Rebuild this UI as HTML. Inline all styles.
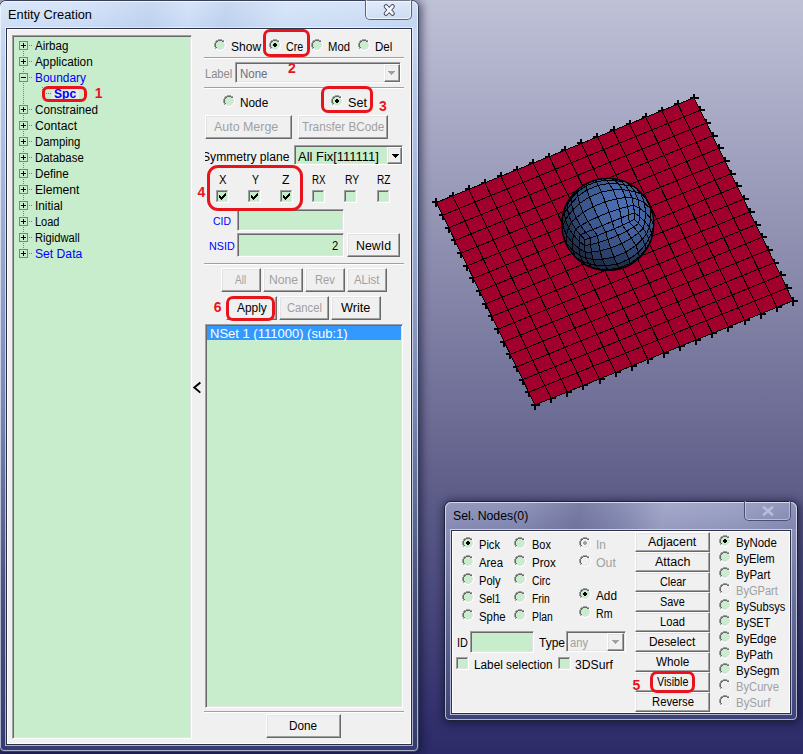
<!DOCTYPE html><html><head><meta charset="utf-8"><style>
html,body{margin:0;padding:0;}body{width:803px;height:754px;overflow:hidden;position:relative;background:linear-gradient(#bfc1d7 0px,#7e7ea3 330px,#5c5c88 500px,#2c2a68 754px);font-family:"Liberation Sans",sans-serif;}
.a{position:absolute;}.t{position:absolute;white-space:nowrap;line-height:1;}
</style></head><body>
<svg width="0" height="0" style="position:absolute" shape-rendering="crispEdges"><defs><symbol id="rg" viewBox="0 0 12 12"><rect x="4" y="0" width="4" height="1" fill="#a0a0a0"/><rect x="2" y="1" width="2" height="1" fill="#a0a0a0"/><rect x="4" y="1" width="4" height="1" fill="#696969"/><rect x="8" y="1" width="2" height="1" fill="#a0a0a0"/><rect x="1" y="2" width="1" height="1" fill="#a0a0a0"/><rect x="2" y="2" width="2" height="1" fill="#696969"/><rect x="4" y="2" width="4" height="1" fill="#c7edcc"/><rect x="8" y="2" width="2" height="1" fill="#696969"/><rect x="10" y="2" width="1" height="1" fill="#ffffff"/><rect x="1" y="3" width="1" height="1" fill="#a0a0a0"/><rect x="2" y="3" width="1" height="1" fill="#696969"/><rect x="3" y="3" width="6" height="1" fill="#c7edcc"/><rect x="9" y="3" width="1" height="1" fill="#e3e3e3"/><rect x="10" y="3" width="1" height="1" fill="#ffffff"/><rect x="0" y="4" width="1" height="1" fill="#a0a0a0"/><rect x="1" y="4" width="1" height="1" fill="#696969"/><rect x="2" y="4" width="8" height="1" fill="#c7edcc"/><rect x="10" y="4" width="1" height="1" fill="#e3e3e3"/><rect x="11" y="4" width="1" height="1" fill="#ffffff"/><rect x="0" y="5" width="1" height="1" fill="#a0a0a0"/><rect x="1" y="5" width="1" height="1" fill="#696969"/><rect x="2" y="5" width="8" height="1" fill="#c7edcc"/><rect x="10" y="5" width="1" height="1" fill="#e3e3e3"/><rect x="11" y="5" width="1" height="1" fill="#ffffff"/><rect x="0" y="6" width="1" height="1" fill="#a0a0a0"/><rect x="1" y="6" width="1" height="1" fill="#696969"/><rect x="2" y="6" width="8" height="1" fill="#c7edcc"/><rect x="10" y="6" width="1" height="1" fill="#e3e3e3"/><rect x="11" y="6" width="1" height="1" fill="#ffffff"/><rect x="0" y="7" width="1" height="1" fill="#a0a0a0"/><rect x="1" y="7" width="1" height="1" fill="#696969"/><rect x="2" y="7" width="8" height="1" fill="#c7edcc"/><rect x="10" y="7" width="1" height="1" fill="#e3e3e3"/><rect x="11" y="7" width="1" height="1" fill="#ffffff"/><rect x="1" y="8" width="1" height="1" fill="#a0a0a0"/><rect x="2" y="8" width="1" height="1" fill="#696969"/><rect x="3" y="8" width="6" height="1" fill="#c7edcc"/><rect x="9" y="8" width="1" height="1" fill="#e3e3e3"/><rect x="10" y="8" width="1" height="1" fill="#ffffff"/><rect x="1" y="9" width="1" height="1" fill="#a0a0a0"/><rect x="2" y="9" width="2" height="1" fill="#e3e3e3"/><rect x="4" y="9" width="4" height="1" fill="#c7edcc"/><rect x="8" y="9" width="2" height="1" fill="#e3e3e3"/><rect x="10" y="9" width="1" height="1" fill="#ffffff"/><rect x="2" y="10" width="2" height="1" fill="#ffffff"/><rect x="4" y="10" width="4" height="1" fill="#e3e3e3"/><rect x="8" y="10" width="2" height="1" fill="#ffffff"/><rect x="4" y="11" width="4" height="1" fill="#ffffff"/></symbol><symbol id="rgc" viewBox="0 0 12 12"><rect x="4" y="0" width="4" height="1" fill="#a0a0a0"/><rect x="2" y="1" width="2" height="1" fill="#a0a0a0"/><rect x="4" y="1" width="4" height="1" fill="#696969"/><rect x="8" y="1" width="2" height="1" fill="#a0a0a0"/><rect x="1" y="2" width="1" height="1" fill="#a0a0a0"/><rect x="2" y="2" width="2" height="1" fill="#696969"/><rect x="4" y="2" width="4" height="1" fill="#c7edcc"/><rect x="8" y="2" width="2" height="1" fill="#696969"/><rect x="10" y="2" width="1" height="1" fill="#ffffff"/><rect x="1" y="3" width="1" height="1" fill="#a0a0a0"/><rect x="2" y="3" width="1" height="1" fill="#696969"/><rect x="3" y="3" width="6" height="1" fill="#c7edcc"/><rect x="9" y="3" width="1" height="1" fill="#e3e3e3"/><rect x="10" y="3" width="1" height="1" fill="#ffffff"/><rect x="0" y="4" width="1" height="1" fill="#a0a0a0"/><rect x="1" y="4" width="1" height="1" fill="#696969"/><rect x="2" y="4" width="8" height="1" fill="#c7edcc"/><rect x="10" y="4" width="1" height="1" fill="#e3e3e3"/><rect x="11" y="4" width="1" height="1" fill="#ffffff"/><rect x="0" y="5" width="1" height="1" fill="#a0a0a0"/><rect x="1" y="5" width="1" height="1" fill="#696969"/><rect x="2" y="5" width="8" height="1" fill="#c7edcc"/><rect x="10" y="5" width="1" height="1" fill="#e3e3e3"/><rect x="11" y="5" width="1" height="1" fill="#ffffff"/><rect x="0" y="6" width="1" height="1" fill="#a0a0a0"/><rect x="1" y="6" width="1" height="1" fill="#696969"/><rect x="2" y="6" width="8" height="1" fill="#c7edcc"/><rect x="10" y="6" width="1" height="1" fill="#e3e3e3"/><rect x="11" y="6" width="1" height="1" fill="#ffffff"/><rect x="0" y="7" width="1" height="1" fill="#a0a0a0"/><rect x="1" y="7" width="1" height="1" fill="#696969"/><rect x="2" y="7" width="8" height="1" fill="#c7edcc"/><rect x="10" y="7" width="1" height="1" fill="#e3e3e3"/><rect x="11" y="7" width="1" height="1" fill="#ffffff"/><rect x="1" y="8" width="1" height="1" fill="#a0a0a0"/><rect x="2" y="8" width="1" height="1" fill="#696969"/><rect x="3" y="8" width="6" height="1" fill="#c7edcc"/><rect x="9" y="8" width="1" height="1" fill="#e3e3e3"/><rect x="10" y="8" width="1" height="1" fill="#ffffff"/><rect x="1" y="9" width="1" height="1" fill="#a0a0a0"/><rect x="2" y="9" width="2" height="1" fill="#e3e3e3"/><rect x="4" y="9" width="4" height="1" fill="#c7edcc"/><rect x="8" y="9" width="2" height="1" fill="#e3e3e3"/><rect x="10" y="9" width="1" height="1" fill="#ffffff"/><rect x="2" y="10" width="2" height="1" fill="#ffffff"/><rect x="4" y="10" width="4" height="1" fill="#e3e3e3"/><rect x="8" y="10" width="2" height="1" fill="#ffffff"/><rect x="4" y="11" width="4" height="1" fill="#ffffff"/><path d="M5 4h2v1h1v2h-1v1h-2v-1h-1v-2h1z" fill="#000"/></symbol><symbol id="rd" viewBox="0 0 12 12"><rect x="4" y="0" width="4" height="1" fill="#a0a0a0"/><rect x="2" y="1" width="2" height="1" fill="#a0a0a0"/><rect x="4" y="1" width="4" height="1" fill="#696969"/><rect x="8" y="1" width="2" height="1" fill="#a0a0a0"/><rect x="1" y="2" width="1" height="1" fill="#a0a0a0"/><rect x="2" y="2" width="2" height="1" fill="#696969"/><rect x="4" y="2" width="4" height="1" fill="#f0f0f0"/><rect x="8" y="2" width="2" height="1" fill="#696969"/><rect x="10" y="2" width="1" height="1" fill="#ffffff"/><rect x="1" y="3" width="1" height="1" fill="#a0a0a0"/><rect x="2" y="3" width="1" height="1" fill="#696969"/><rect x="3" y="3" width="6" height="1" fill="#f0f0f0"/><rect x="9" y="3" width="1" height="1" fill="#e3e3e3"/><rect x="10" y="3" width="1" height="1" fill="#ffffff"/><rect x="0" y="4" width="1" height="1" fill="#a0a0a0"/><rect x="1" y="4" width="1" height="1" fill="#696969"/><rect x="2" y="4" width="8" height="1" fill="#f0f0f0"/><rect x="10" y="4" width="1" height="1" fill="#e3e3e3"/><rect x="11" y="4" width="1" height="1" fill="#ffffff"/><rect x="0" y="5" width="1" height="1" fill="#a0a0a0"/><rect x="1" y="5" width="1" height="1" fill="#696969"/><rect x="2" y="5" width="8" height="1" fill="#f0f0f0"/><rect x="10" y="5" width="1" height="1" fill="#e3e3e3"/><rect x="11" y="5" width="1" height="1" fill="#ffffff"/><rect x="0" y="6" width="1" height="1" fill="#a0a0a0"/><rect x="1" y="6" width="1" height="1" fill="#696969"/><rect x="2" y="6" width="8" height="1" fill="#f0f0f0"/><rect x="10" y="6" width="1" height="1" fill="#e3e3e3"/><rect x="11" y="6" width="1" height="1" fill="#ffffff"/><rect x="0" y="7" width="1" height="1" fill="#a0a0a0"/><rect x="1" y="7" width="1" height="1" fill="#696969"/><rect x="2" y="7" width="8" height="1" fill="#f0f0f0"/><rect x="10" y="7" width="1" height="1" fill="#e3e3e3"/><rect x="11" y="7" width="1" height="1" fill="#ffffff"/><rect x="1" y="8" width="1" height="1" fill="#a0a0a0"/><rect x="2" y="8" width="1" height="1" fill="#696969"/><rect x="3" y="8" width="6" height="1" fill="#f0f0f0"/><rect x="9" y="8" width="1" height="1" fill="#e3e3e3"/><rect x="10" y="8" width="1" height="1" fill="#ffffff"/><rect x="1" y="9" width="1" height="1" fill="#a0a0a0"/><rect x="2" y="9" width="2" height="1" fill="#e3e3e3"/><rect x="4" y="9" width="4" height="1" fill="#f0f0f0"/><rect x="8" y="9" width="2" height="1" fill="#e3e3e3"/><rect x="10" y="9" width="1" height="1" fill="#ffffff"/><rect x="2" y="10" width="2" height="1" fill="#ffffff"/><rect x="4" y="10" width="4" height="1" fill="#e3e3e3"/><rect x="8" y="10" width="2" height="1" fill="#ffffff"/><rect x="4" y="11" width="4" height="1" fill="#ffffff"/></symbol><symbol id="rdc" viewBox="0 0 12 12"><rect x="4" y="0" width="4" height="1" fill="#a0a0a0"/><rect x="2" y="1" width="2" height="1" fill="#a0a0a0"/><rect x="4" y="1" width="4" height="1" fill="#696969"/><rect x="8" y="1" width="2" height="1" fill="#a0a0a0"/><rect x="1" y="2" width="1" height="1" fill="#a0a0a0"/><rect x="2" y="2" width="2" height="1" fill="#696969"/><rect x="4" y="2" width="4" height="1" fill="#f0f0f0"/><rect x="8" y="2" width="2" height="1" fill="#696969"/><rect x="10" y="2" width="1" height="1" fill="#ffffff"/><rect x="1" y="3" width="1" height="1" fill="#a0a0a0"/><rect x="2" y="3" width="1" height="1" fill="#696969"/><rect x="3" y="3" width="6" height="1" fill="#f0f0f0"/><rect x="9" y="3" width="1" height="1" fill="#e3e3e3"/><rect x="10" y="3" width="1" height="1" fill="#ffffff"/><rect x="0" y="4" width="1" height="1" fill="#a0a0a0"/><rect x="1" y="4" width="1" height="1" fill="#696969"/><rect x="2" y="4" width="8" height="1" fill="#f0f0f0"/><rect x="10" y="4" width="1" height="1" fill="#e3e3e3"/><rect x="11" y="4" width="1" height="1" fill="#ffffff"/><rect x="0" y="5" width="1" height="1" fill="#a0a0a0"/><rect x="1" y="5" width="1" height="1" fill="#696969"/><rect x="2" y="5" width="8" height="1" fill="#f0f0f0"/><rect x="10" y="5" width="1" height="1" fill="#e3e3e3"/><rect x="11" y="5" width="1" height="1" fill="#ffffff"/><rect x="0" y="6" width="1" height="1" fill="#a0a0a0"/><rect x="1" y="6" width="1" height="1" fill="#696969"/><rect x="2" y="6" width="8" height="1" fill="#f0f0f0"/><rect x="10" y="6" width="1" height="1" fill="#e3e3e3"/><rect x="11" y="6" width="1" height="1" fill="#ffffff"/><rect x="0" y="7" width="1" height="1" fill="#a0a0a0"/><rect x="1" y="7" width="1" height="1" fill="#696969"/><rect x="2" y="7" width="8" height="1" fill="#f0f0f0"/><rect x="10" y="7" width="1" height="1" fill="#e3e3e3"/><rect x="11" y="7" width="1" height="1" fill="#ffffff"/><rect x="1" y="8" width="1" height="1" fill="#a0a0a0"/><rect x="2" y="8" width="1" height="1" fill="#696969"/><rect x="3" y="8" width="6" height="1" fill="#f0f0f0"/><rect x="9" y="8" width="1" height="1" fill="#e3e3e3"/><rect x="10" y="8" width="1" height="1" fill="#ffffff"/><rect x="1" y="9" width="1" height="1" fill="#a0a0a0"/><rect x="2" y="9" width="2" height="1" fill="#e3e3e3"/><rect x="4" y="9" width="4" height="1" fill="#f0f0f0"/><rect x="8" y="9" width="2" height="1" fill="#e3e3e3"/><rect x="10" y="9" width="1" height="1" fill="#ffffff"/><rect x="2" y="10" width="2" height="1" fill="#ffffff"/><rect x="4" y="10" width="4" height="1" fill="#e3e3e3"/><rect x="8" y="10" width="2" height="1" fill="#ffffff"/><rect x="4" y="11" width="4" height="1" fill="#ffffff"/><path d="M5 4h2v1h1v2h-1v1h-2v-1h-1v-2h1z" fill="#a0a0a0"/></symbol><symbol id="cb" viewBox="0 0 13 13"><rect x="0" y="0" width="13" height="13" fill="#fff"/><rect x="0" y="0" width="12" height="12" fill="#a0a0a0"/><rect x="1" y="1" width="11" height="11" fill="#e3e3e3"/><rect x="1" y="1" width="10" height="10" fill="#696969"/><rect x="2" y="2" width="9" height="9" fill="#c7edcc"/></symbol><symbol id="cbc" viewBox="0 0 13 13"><use href="#cb" width="13" height="13"/><rect x="3" y="5" width="1" height="3" fill="#000"/><rect x="4" y="6" width="1" height="3" fill="#000"/><rect x="5" y="7" width="1" height="3" fill="#000"/><rect x="6" y="6" width="1" height="3" fill="#000"/><rect x="7" y="5" width="1" height="3" fill="#000"/><rect x="8" y="4" width="1" height="3" fill="#000"/><rect x="9" y="3" width="1" height="3" fill="#000"/></symbol></defs></svg>
<svg class="a" style="left:0;top:0" width="803" height="754" viewBox="0 0 803 754"><path d="M432 201h9v2h-9z M435 198h2v9h-2zM439 214h9v2h-9z M442 211h2v9h-2zM445 227h9v2h-9z M448 224h2v9h-2zM451 239h9v2h-9z M454 236h2v9h-2zM457 252h9v2h-9z M460 249h2v9h-2zM463 265h9v2h-9z M466 262h2v9h-2zM469 277h9v2h-9z M472 274h2v9h-2zM476 290h9v2h-9z M479 287h2v9h-2zM482 303h9v2h-9z M485 300h2v9h-2zM488 315h9v2h-9z M491 312h2v9h-2zM494 328h9v2h-9z M497 325h2v9h-2zM500 341h9v2h-9z M503 338h2v9h-2zM506 353h9v2h-9z M509 350h2v9h-2zM513 366h9v2h-9z M516 363h2v9h-2zM519 379h9v2h-9z M522 376h2v9h-2zM525 391h9v2h-9z M528 388h2v9h-2zM531 404h9v2h-9z M534 401h2v9h-2zM449 195h9v2h-9z M452 192h2v9h-2zM547 397h9v2h-9z M550 394h2v9h-2zM465 188h9v2h-9z M468 185h2v9h-2zM563 391h9v2h-9z M566 388h2v9h-2zM481 182h9v2h-9z M484 179h2v9h-2zM579 384h9v2h-9z M582 381h2v9h-2zM497 175h9v2h-9z M500 172h2v9h-2zM596 378h9v2h-9z M599 375h2v9h-2zM513 169h9v2h-9z M516 166h2v9h-2zM612 371h9v2h-9z M615 368h2v9h-2zM529 162h9v2h-9z M532 159h2v9h-2zM628 365h9v2h-9z M631 362h2v9h-2zM545 156h9v2h-9z M548 153h2v9h-2zM644 358h9v2h-9z M647 355h2v9h-2zM561 149h9v2h-9z M564 146h2v9h-2zM660 352h9v2h-9z M663 349h2v9h-2zM577 142h9v2h-9z M580 139h2v9h-2zM676 345h9v2h-9z M679 342h2v9h-2zM593 136h9v2h-9z M596 133h2v9h-2zM692 339h9v2h-9z M695 336h2v9h-2zM610 129h9v2h-9z M613 126h2v9h-2zM708 332h9v2h-9z M711 329h2v9h-2zM626 123h9v2h-9z M629 120h2v9h-2zM724 326h9v2h-9z M727 323h2v9h-2zM642 116h9v2h-9z M645 113h2v9h-2zM741 319h9v2h-9z M744 316h2v9h-2zM658 110h9v2h-9z M661 107h2v9h-2zM757 313h9v2h-9z M760 310h2v9h-2zM674 103h9v2h-9z M677 100h2v9h-2zM773 306h9v2h-9z M776 303h2v9h-2zM690 97h9v2h-9z M693 94h2v9h-2zM696 109h9v2h-9z M699 106h2v9h-2zM702 122h9v2h-9z M705 119h2v9h-2zM709 135h9v2h-9z M712 132h2v9h-2zM715 147h9v2h-9z M718 144h2v9h-2zM721 160h9v2h-9z M724 157h2v9h-2zM727 173h9v2h-9z M730 170h2v9h-2zM733 185h9v2h-9z M736 182h2v9h-2zM740 198h9v2h-9z M743 195h2v9h-2zM746 211h9v2h-9z M749 208h2v9h-2zM752 224h9v2h-9z M755 221h2v9h-2zM758 236h9v2h-9z M761 233h2v9h-2zM764 249h9v2h-9z M767 246h2v9h-2zM770 262h9v2h-9z M773 259h2v9h-2zM777 274h9v2h-9z M780 271h2v9h-2zM783 287h9v2h-9z M786 284h2v9h-2zM789 300h9v2h-9z M792 297h2v9h-2z" fill="#000" shape-rendering="crispEdges"/><polygon points="436.5,202.5 694.0,97.6 793.0,300.8 535.0,405.0" fill="#a2002c" shape-rendering="crispEdges"/><path d="M436.5 202.5L535.0 405.0M436.5 202.5L694.0 97.6M452.6 195.9L551.1 398.5M442.7 215.2L700.2 110.3M468.7 189.4L567.2 392.0M448.8 227.8L706.4 123.0M484.8 182.8L583.4 385.5M455.0 240.5L712.6 135.7M500.9 176.3L599.5 378.9M461.1 253.1L718.8 148.4M517.0 169.7L615.6 372.4M467.3 265.8L724.9 161.1M533.1 163.2L631.8 365.9M473.4 278.4L731.1 173.8M549.2 156.6L647.9 359.4M479.6 291.1L737.3 186.5M565.2 150.1L664.0 352.9M485.8 303.8L743.5 199.2M581.3 143.5L680.1 346.4M491.9 316.4L749.7 211.9M597.4 136.9L696.2 339.9M498.1 329.1L755.9 224.6M613.5 130.4L712.4 333.4M504.2 341.7L762.1 237.3M629.6 123.8L728.5 326.9M510.4 354.4L768.2 250.0M645.7 117.3L744.6 320.3M516.5 367.0L774.4 262.7M661.8 110.7L760.8 313.8M522.7 379.7L780.6 275.4M677.9 104.2L776.9 307.3M528.8 392.3L786.8 288.1M694.0 97.6L793.0 300.8M535.0 405.0L793.0 300.8" stroke="#000" stroke-width="1" fill="none" shape-rendering="crispEdges"/><polygon points="642.62,254.36 644.46,252.66 648.42,246.60 646.72,248.92" fill="rgb(30,44,72)" stroke="rgb(30,44,72)" stroke-width="0.5"/><polygon points="652.84,222.92 653.45,231.42 653.67,225.22 653.25,215.64" fill="rgb(44,65,106)" stroke="rgb(44,65,106)" stroke-width="0.5"/><polygon points="566.32,205.54 563.74,210.54 565.31,206.57 567.18,202.20" fill="rgb(30,44,72)" stroke="rgb(30,44,72)" stroke-width="0.5"/><polygon points="624.33,181.86 629.61,183.65 625.62,181.95 621.29,180.11" fill="rgb(53,78,127)" stroke="rgb(53,78,127)" stroke-width="0.5"/><polygon points="565.34,240.32 569.22,249.95 566.23,242.79 562.35,233.16" fill="rgb(30,44,72)" stroke="rgb(30,44,72)" stroke-width="0.5"/><polygon points="649.37,206.01 653.25,215.64 650.26,208.48 646.38,198.85" fill="rgb(52,77,125)" stroke="rgb(52,77,125)" stroke-width="0.5"/><polygon points="589.98,266.85 594.31,268.69 591.27,266.94 585.99,265.15" fill="rgb(30,44,72)" stroke="rgb(30,44,72)" stroke-width="0.5"/><polygon points="650.29,242.23 648.42,246.60 649.28,243.26 651.86,238.26" fill="rgb(38,56,91)" stroke="rgb(38,56,91)" stroke-width="0.5"/><polygon points="561.93,223.58 562.35,233.16 562.76,225.88 562.15,217.38" fill="rgb(30,44,72)" stroke="rgb(30,44,72)" stroke-width="0.5"/><polygon points="567.18,202.20 568.88,199.88 572.98,194.44 571.14,196.14" fill="rgb(30,45,73)" stroke="rgb(30,45,73)" stroke-width="0.5"/><polygon points="571.14,196.14 572.98,194.44 578.76,188.89 577.17,189.69" fill="rgb(35,51,83)" stroke="rgb(35,51,83)" stroke-width="0.5"/><polygon points="614.22,178.55 611.63,178.66 618.37,179.67 621.29,180.11" fill="rgb(54,80,131)" stroke="rgb(54,80,131)" stroke-width="0.5"/><polygon points="577.17,189.69 578.76,188.89 586.22,183.97 585.48,183.85" fill="rgb(40,59,95)" stroke="rgb(40,59,95)" stroke-width="0.5"/><polygon points="640.06,191.69 646.38,198.85 640.88,193.99 635.46,187.45" fill="rgb(57,84,137)" stroke="rgb(57,84,137)" stroke-width="0.5"/><polygon points="605.40,178.17 603.62,178.74 611.63,178.66 614.22,178.55" fill="rgb(52,77,126)" stroke="rgb(52,77,126)" stroke-width="0.5"/><polygon points="585.48,183.85 586.22,183.97 594.84,180.45 595.38,179.81" fill="rgb(45,66,107)" stroke="rgb(45,66,107)" stroke-width="0.5"/><polygon points="595.38,179.81 594.84,180.45 603.62,178.74 605.40,178.17" fill="rgb(49,72,118)" stroke="rgb(49,72,118)" stroke-width="0.5"/><polygon points="563.74,210.54 562.15,217.38 564.43,212.48 565.31,206.57" fill="rgb(30,44,72)" stroke="rgb(30,44,72)" stroke-width="0.5"/><polygon points="580.14,261.35 585.99,265.15 582.39,261.36 575.54,257.11" fill="rgb(30,44,72)" stroke="rgb(30,44,72)" stroke-width="0.5"/><polygon points="629.61,183.65 635.46,187.45 630.30,185.59 625.62,181.95" fill="rgb(58,86,140)" stroke="rgb(58,86,140)" stroke-width="0.5"/><polygon points="594.31,268.69 591.27,266.94 598.44,268.86 601.38,270.25" fill="rgb(30,44,72)" stroke="rgb(30,44,72)" stroke-width="0.5"/><polygon points="653.45,231.42 651.86,238.26 651.68,233.07 653.67,225.22" fill="rgb(45,67,109)" stroke="rgb(45,67,109)" stroke-width="0.5"/><polygon points="644.46,252.66 645.49,249.65 649.28,243.26 648.42,246.60" fill="rgb(37,54,88)" stroke="rgb(37,54,88)" stroke-width="0.5"/><polygon points="567.18,202.20 565.31,206.57 567.75,203.80 568.88,199.88" fill="rgb(30,44,72)" stroke="rgb(30,44,72)" stroke-width="0.5"/><polygon points="601.38,270.25 598.44,268.86 607.86,269.61 610.20,270.63" fill="rgb(30,44,72)" stroke="rgb(30,44,72)" stroke-width="0.5"/><polygon points="621.29,180.11 625.62,181.95 621.86,181.71 618.37,179.67" fill="rgb(58,85,139)" stroke="rgb(58,85,139)" stroke-width="0.5"/><polygon points="638.43,259.11 639.28,256.78 645.49,249.65 644.46,252.66" fill="rgb(32,48,78)" stroke="rgb(32,48,78)" stroke-width="0.5"/><polygon points="610.20,270.63 607.86,269.61 619.02,268.02 620.22,268.99" fill="rgb(30,44,72)" stroke="rgb(30,44,72)" stroke-width="0.5"/><polygon points="630.12,264.95 630.18,263.46 639.28,256.78 638.43,259.11" fill="rgb(30,44,72)" stroke="rgb(30,44,72)" stroke-width="0.5"/><polygon points="620.22,268.99 619.02,268.02 630.18,263.46 630.12,264.95" fill="rgb(30,44,72)" stroke="rgb(30,44,72)" stroke-width="0.5"/><polygon points="569.22,249.95 575.54,257.11 572.75,250.46 566.23,242.79" fill="rgb(30,44,72)" stroke="rgb(30,44,72)" stroke-width="0.5"/><polygon points="653.25,215.64 653.67,225.22 650.88,218.56 650.26,208.48" fill="rgb(54,80,131)" stroke="rgb(54,80,131)" stroke-width="0.5"/><polygon points="568.88,199.88 572.98,194.44 571.77,197.92 567.75,203.80" fill="rgb(35,52,84)" stroke="rgb(35,52,84)" stroke-width="0.5"/><polygon points="611.63,178.66 618.37,179.67 621.86,181.71 614.85,180.33" fill="rgb(59,87,142)" stroke="rgb(59,87,142)" stroke-width="0.5"/><polygon points="572.98,194.44 578.76,188.89 577.86,191.64 571.77,197.92" fill="rgb(40,59,96)" stroke="rgb(40,59,96)" stroke-width="0.5"/><polygon points="585.99,265.15 591.27,266.94 588.46,263.49 582.39,261.36" fill="rgb(30,44,72)" stroke="rgb(30,44,72)" stroke-width="0.5"/><polygon points="603.62,178.74 611.63,178.66 614.85,180.33 606.09,180.11" fill="rgb(57,85,138)" stroke="rgb(57,85,138)" stroke-width="0.5"/><polygon points="562.35,233.16 566.23,242.79 566.36,234.84 562.76,225.88" fill="rgb(30,44,72)" stroke="rgb(30,44,72)" stroke-width="0.5"/><polygon points="651.86,238.26 649.28,243.26 648.78,238.86 651.68,233.07" fill="rgb(46,68,111)" stroke="rgb(46,68,111)" stroke-width="0.5"/><polygon points="578.76,188.89 586.22,183.97 586.21,185.89 577.86,191.64" fill="rgb(45,67,109)" stroke="rgb(45,67,109)" stroke-width="0.5"/><polygon points="594.84,180.45 603.62,178.74 606.09,180.11 596.11,181.85" fill="rgb(55,81,131)" stroke="rgb(55,81,131)" stroke-width="0.5"/><polygon points="646.38,198.85 650.26,208.48 644.49,202.95 640.88,193.99" fill="rgb(61,90,147)" stroke="rgb(61,90,147)" stroke-width="0.5"/><polygon points="586.22,183.97 594.84,180.45 596.11,181.85 586.21,185.89" fill="rgb(50,74,121)" stroke="rgb(50,74,121)" stroke-width="0.5"/><polygon points="562.15,217.38 562.76,225.88 565.38,219.81 564.43,212.48" fill="rgb(30,44,72)" stroke="rgb(30,44,72)" stroke-width="0.5"/><polygon points="565.31,206.57 564.43,212.48 567.54,208.96 567.75,203.80" fill="rgb(31,46,76)" stroke="rgb(31,46,76)" stroke-width="0.5"/><polygon points="625.62,181.95 630.30,185.59 625.55,185.28 621.86,181.71" fill="rgb(63,92,150)" stroke="rgb(63,92,150)" stroke-width="0.5"/><polygon points="635.46,187.45 640.88,193.99 634.67,191.52 630.30,185.59" fill="rgb(63,94,152)" stroke="rgb(63,94,152)" stroke-width="0.5"/><polygon points="591.27,266.94 588.46,263.49 595.48,265.27 598.44,268.86" fill="rgb(30,44,72)" stroke="rgb(30,44,72)" stroke-width="0.5"/><polygon points="645.49,249.65 644.98,245.06 648.78,238.86 649.28,243.26" fill="rgb(45,66,108)" stroke="rgb(45,66,108)" stroke-width="0.5"/><polygon points="575.54,257.11 582.39,261.36 579.92,255.46 572.75,250.46" fill="rgb(30,44,72)" stroke="rgb(30,44,72)" stroke-width="0.5"/><polygon points="653.67,225.22 651.68,233.07 649.21,227.17 650.88,218.56" fill="rgb(55,81,132)" stroke="rgb(55,81,132)" stroke-width="0.5"/><polygon points="598.44,268.86 595.48,265.27 605.08,265.92 607.86,269.61" fill="rgb(30,44,72)" stroke="rgb(30,44,72)" stroke-width="0.5"/><polygon points="639.28,256.78 638.56,252.25 644.98,245.06 645.49,249.65" fill="rgb(41,61,100)" stroke="rgb(41,61,100)" stroke-width="0.5"/><polygon points="567.75,203.80 571.77,197.92 571.49,203.03 567.54,208.96" fill="rgb(38,56,91)" stroke="rgb(38,56,91)" stroke-width="0.5"/><polygon points="614.85,180.33 621.86,181.71 625.55,185.28 618.54,183.82" fill="rgb(64,95,154)" stroke="rgb(64,95,154)" stroke-width="0.5"/><polygon points="607.86,269.61 605.08,265.92 616.87,264.16 619.02,268.02" fill="rgb(30,44,72)" stroke="rgb(30,44,72)" stroke-width="0.5"/><polygon points="630.18,263.46 628.88,259.25 638.56,252.25 639.28,256.78" fill="rgb(37,54,89)" stroke="rgb(37,54,89)" stroke-width="0.5"/><polygon points="571.77,197.92 577.86,191.64 577.86,196.34 571.49,203.03" fill="rgb(44,64,105)" stroke="rgb(44,64,105)" stroke-width="0.5"/><polygon points="566.23,242.79 572.75,250.46 572.30,242.61 566.36,234.84" fill="rgb(30,44,72)" stroke="rgb(30,44,72)" stroke-width="0.5"/><polygon points="619.02,268.02 616.87,264.16 628.88,259.25 630.18,263.46" fill="rgb(31,46,75)" stroke="rgb(31,46,75)" stroke-width="0.5"/><polygon points="606.09,180.11 614.85,180.33 618.54,183.82 609.29,183.51" fill="rgb(63,93,152)" stroke="rgb(63,93,152)" stroke-width="0.5"/><polygon points="650.26,208.48 650.88,218.56 645.61,212.67 644.49,202.95" fill="rgb(63,93,152)" stroke="rgb(63,93,152)" stroke-width="0.5"/><polygon points="564.43,212.48 565.38,219.81 568.73,215.27 567.54,208.96" fill="rgb(34,50,82)" stroke="rgb(34,50,82)" stroke-width="0.5"/><polygon points="582.39,261.36 588.46,263.49 586.31,258.35 579.92,255.46" fill="rgb(30,44,72)" stroke="rgb(30,44,72)" stroke-width="0.5"/><polygon points="630.30,185.59 634.67,191.52 629.04,190.64 625.55,185.28" fill="rgb(67,99,161)" stroke="rgb(67,99,161)" stroke-width="0.5"/><polygon points="562.76,225.88 566.36,234.84 568.58,227.76 565.38,219.81" fill="rgb(30,44,72)" stroke="rgb(30,44,72)" stroke-width="0.5"/><polygon points="577.86,191.64 586.21,185.89 587.06,189.94 577.86,196.34" fill="rgb(50,74,120)" stroke="rgb(50,74,120)" stroke-width="0.5"/><polygon points="651.68,233.07 648.78,238.86 646.63,233.73 649.21,227.17" fill="rgb(54,80,130)" stroke="rgb(54,80,130)" stroke-width="0.5"/><polygon points="596.11,181.85 606.09,180.11 609.29,183.51 598.22,185.38" fill="rgb(61,90,146)" stroke="rgb(61,90,146)" stroke-width="0.5"/><polygon points="640.88,193.99 644.49,202.95 637.87,199.47 634.67,191.52" fill="rgb(67,99,161)" stroke="rgb(67,99,161)" stroke-width="0.5"/><polygon points="586.21,185.89 596.11,181.85 598.22,185.38 587.06,189.94" fill="rgb(56,83,135)" stroke="rgb(56,83,135)" stroke-width="0.5"/><polygon points="588.46,263.49 586.31,258.35 593.01,259.36 595.48,265.27" fill="rgb(30,44,72)" stroke="rgb(30,44,72)" stroke-width="0.5"/><polygon points="644.98,245.06 642.51,239.16 646.63,233.73 648.78,238.86" fill="rgb(53,78,127)" stroke="rgb(53,78,127)" stroke-width="0.5"/><polygon points="567.54,208.96 571.49,203.03 572.81,209.87 568.73,215.27" fill="rgb(41,60,98)" stroke="rgb(41,60,98)" stroke-width="0.5"/><polygon points="572.75,250.46 579.92,255.46 578.95,248.31 572.30,242.61" fill="rgb(30,44,72)" stroke="rgb(30,44,72)" stroke-width="0.5"/><polygon points="618.54,183.82 625.55,185.28 629.04,190.64 622.30,189.66" fill="rgb(69,102,165)" stroke="rgb(69,102,165)" stroke-width="0.5"/><polygon points="650.88,218.56 649.21,227.17 644.82,221.42 645.61,212.67" fill="rgb(63,93,151)" stroke="rgb(63,93,151)" stroke-width="0.5"/><polygon points="565.38,219.81 568.58,227.76 571.51,222.18 568.73,215.27" fill="rgb(37,54,88)" stroke="rgb(37,54,88)" stroke-width="0.5"/><polygon points="595.48,265.27 593.01,259.36 602.29,259.26 605.08,265.92" fill="rgb(30,44,72)" stroke="rgb(30,44,72)" stroke-width="0.5"/><polygon points="566.36,234.84 572.30,242.61 573.56,235.14 568.58,227.76" fill="rgb(31,46,75)" stroke="rgb(31,46,75)" stroke-width="0.5"/><polygon points="634.67,191.52 637.87,199.47 631.82,197.56 629.04,190.64" fill="rgb(71,104,169)" stroke="rgb(71,104,169)" stroke-width="0.5"/><polygon points="638.56,252.25 635.77,245.59 642.51,239.16 644.98,245.06" fill="rgb(51,75,122)" stroke="rgb(51,75,122)" stroke-width="0.5"/><polygon points="644.49,202.95 645.61,212.67 639.43,208.25 637.87,199.47" fill="rgb(69,102,165)" stroke="rgb(69,102,165)" stroke-width="0.5"/><polygon points="571.49,203.03 577.86,196.34 579.51,203.46 572.81,209.87" fill="rgb(48,70,114)" stroke="rgb(48,70,114)" stroke-width="0.5"/><polygon points="609.29,183.51 618.54,183.82 622.30,189.66 612.99,189.79" fill="rgb(69,102,165)" stroke="rgb(69,102,165)" stroke-width="0.5"/><polygon points="579.92,255.46 586.31,258.35 585.06,252.11 578.95,248.31" fill="rgb(30,44,72)" stroke="rgb(30,44,72)" stroke-width="0.5"/><polygon points="649.21,227.17 646.63,233.73 643.08,228.43 644.82,221.42" fill="rgb(62,91,148)" stroke="rgb(62,91,148)" stroke-width="0.5"/><polygon points="605.08,265.92 602.29,259.26 613.88,257.00 616.87,264.16" fill="rgb(35,52,84)" stroke="rgb(35,52,84)" stroke-width="0.5"/><polygon points="628.88,259.25 625.88,252.10 635.77,245.59 638.56,252.25" fill="rgb(47,69,113)" stroke="rgb(47,69,113)" stroke-width="0.5"/><polygon points="577.86,196.34 587.06,189.94 589.37,196.97 579.51,203.46" fill="rgb(55,81,132)" stroke="rgb(55,81,132)" stroke-width="0.5"/><polygon points="598.22,185.38 609.29,183.51 612.99,189.79 601.38,192.07" fill="rgb(67,99,160)" stroke="rgb(67,99,160)" stroke-width="0.5"/><polygon points="616.87,264.16 613.88,257.00 625.88,252.10 628.88,259.25" fill="rgb(41,61,100)" stroke="rgb(41,61,100)" stroke-width="0.5"/><polygon points="568.73,215.27 572.81,209.87 576.01,217.81 571.51,222.18" fill="rgb(43,64,104)" stroke="rgb(43,64,104)" stroke-width="0.5"/><polygon points="587.06,189.94 598.22,185.38 601.38,192.07 589.37,196.97" fill="rgb(62,92,149)" stroke="rgb(62,92,149)" stroke-width="0.5"/><polygon points="586.31,258.35 585.06,252.11 591.40,252.02 593.01,259.36" fill="rgb(32,47,77)" stroke="rgb(32,47,77)" stroke-width="0.5"/><polygon points="572.30,242.61 578.95,248.31 579.23,241.15 573.56,235.14" fill="rgb(34,50,81)" stroke="rgb(34,50,81)" stroke-width="0.5"/><polygon points="622.30,189.66 629.04,190.64 631.82,197.56 625.50,197.60" fill="rgb(72,107,173)" stroke="rgb(72,107,173)" stroke-width="0.5"/><polygon points="642.51,239.16 638.45,232.81 643.08,228.43 646.63,233.73" fill="rgb(60,89,145)" stroke="rgb(60,89,145)" stroke-width="0.5"/><polygon points="645.61,212.67 644.82,221.42 639.54,216.53 639.43,208.25" fill="rgb(69,101,165)" stroke="rgb(69,101,165)" stroke-width="0.5"/><polygon points="568.58,227.76 573.56,235.14 575.57,228.92 571.51,222.18" fill="rgb(39,57,93)" stroke="rgb(39,57,93)" stroke-width="0.5"/><polygon points="637.87,199.47 639.43,208.25 633.59,205.24 631.82,197.56" fill="rgb(72,106,173)" stroke="rgb(72,106,173)" stroke-width="0.5"/><polygon points="578.95,248.31 585.06,252.11 584.67,245.64 579.23,241.15" fill="rgb(36,53,86)" stroke="rgb(36,53,86)" stroke-width="0.5"/><polygon points="644.82,221.42 643.08,228.43 638.78,223.55 639.54,216.53" fill="rgb(67,99,161)" stroke="rgb(67,99,161)" stroke-width="0.5"/><polygon points="593.01,259.36 591.40,252.02 600.02,250.87 602.29,259.26" fill="rgb(38,56,91)" stroke="rgb(38,56,91)" stroke-width="0.5"/><polygon points="572.81,209.87 579.51,203.46 583.11,212.42 576.01,217.81" fill="rgb(51,75,122)" stroke="rgb(51,75,122)" stroke-width="0.5"/><polygon points="635.77,245.59 631.44,238.04 638.45,232.81 642.51,239.16" fill="rgb(59,87,142)" stroke="rgb(59,87,142)" stroke-width="0.5"/><polygon points="612.99,189.79 622.30,189.66 625.50,197.60 616.60,198.75" fill="rgb(73,107,175)" stroke="rgb(73,107,175)" stroke-width="0.5"/><polygon points="573.56,235.14 579.23,241.15 580.24,234.82 575.57,228.92" fill="rgb(41,60,98)" stroke="rgb(41,60,98)" stroke-width="0.5"/><polygon points="639.43,208.25 639.54,216.53 634.35,212.73 633.59,205.24" fill="rgb(72,106,172)" stroke="rgb(72,106,172)" stroke-width="0.5"/><polygon points="571.51,222.18 576.01,217.81 580.62,225.69 575.57,228.92" fill="rgb(46,67,110)" stroke="rgb(46,67,110)" stroke-width="0.5"/><polygon points="625.50,197.60 631.82,197.56 633.59,205.24 627.67,206.48" fill="rgb(74,109,177)" stroke="rgb(74,109,177)" stroke-width="0.5"/><polygon points="585.06,252.11 584.67,245.64 590.63,244.55 591.40,252.02" fill="rgb(39,58,94)" stroke="rgb(39,58,94)" stroke-width="0.5"/><polygon points="638.45,232.81 633.71,226.96 638.78,223.55 643.08,228.43" fill="rgb(66,97,158)" stroke="rgb(66,97,158)" stroke-width="0.5"/><polygon points="579.23,241.15 584.67,245.64 584.87,239.61 580.24,234.82" fill="rgb(42,62,101)" stroke="rgb(42,62,101)" stroke-width="0.5"/><polygon points="602.29,259.26 600.02,250.87 610.67,248.05 613.88,257.00" fill="rgb(44,66,107)" stroke="rgb(44,66,107)" stroke-width="0.5"/><polygon points="639.54,216.53 638.78,223.55 634.37,219.40 634.35,212.73" fill="rgb(70,104,169)" stroke="rgb(70,104,169)" stroke-width="0.5"/><polygon points="625.88,252.10 621.83,243.49 631.44,238.04 635.77,245.59" fill="rgb(56,83,135)" stroke="rgb(56,83,135)" stroke-width="0.5"/><polygon points="579.51,203.46 589.37,196.97 593.25,206.61 583.11,212.42" fill="rgb(59,87,142)" stroke="rgb(59,87,142)" stroke-width="0.5"/><polygon points="601.38,192.07 612.99,189.79 616.60,198.75 605.26,201.71" fill="rgb(71,105,171)" stroke="rgb(71,105,171)" stroke-width="0.5"/><polygon points="613.88,257.00 610.67,248.05 621.83,243.49 625.88,252.10" fill="rgb(51,75,122)" stroke="rgb(51,75,122)" stroke-width="0.5"/><polygon points="575.57,228.92 580.62,225.69 585.70,232.50 580.24,234.82" fill="rgb(47,69,113)" stroke="rgb(47,69,113)" stroke-width="0.5"/><polygon points="589.37,196.97 601.38,192.07 605.26,201.71 593.25,206.61" fill="rgb(67,98,160)" stroke="rgb(67,98,160)" stroke-width="0.5"/><polygon points="627.67,206.48 633.59,205.24 634.35,212.73 628.78,214.91" fill="rgb(73,108,176)" stroke="rgb(73,108,176)" stroke-width="0.5"/><polygon points="584.67,245.64 584.87,239.61 590.47,237.87 590.63,244.55" fill="rgb(45,67,108)" stroke="rgb(45,67,108)" stroke-width="0.5"/><polygon points="576.01,217.81 583.11,212.42 588.02,221.56 580.62,225.69" fill="rgb(53,78,127)" stroke="rgb(53,78,127)" stroke-width="0.5"/><polygon points="591.40,252.02 590.63,244.55 598.46,242.57 600.02,250.87" fill="rgb(45,67,109)" stroke="rgb(45,67,109)" stroke-width="0.5"/><polygon points="633.71,226.96 629.12,222.09 634.37,219.40 638.78,223.55" fill="rgb(69,102,166)" stroke="rgb(69,102,166)" stroke-width="0.5"/><polygon points="616.60,198.75 625.50,197.60 627.67,206.48 619.44,208.73" fill="rgb(74,110,178)" stroke="rgb(74,110,178)" stroke-width="0.5"/><polygon points="631.44,238.04 626.69,231.04 633.71,226.96 638.45,232.81" fill="rgb(65,96,156)" stroke="rgb(65,96,156)" stroke-width="0.5"/><polygon points="580.24,234.82 585.70,232.50 590.47,237.87 584.87,239.61" fill="rgb(48,70,114)" stroke="rgb(48,70,114)" stroke-width="0.5"/><polygon points="628.78,214.91 634.35,212.73 634.37,219.40 629.12,222.09" fill="rgb(72,106,172)" stroke="rgb(72,106,172)" stroke-width="0.5"/><polygon points="600.02,250.87 598.46,242.57 607.87,239.47 610.67,248.05" fill="rgb(52,77,125)" stroke="rgb(52,77,125)" stroke-width="0.5"/><polygon points="580.62,225.69 588.02,221.56 593.07,229.40 585.70,232.50" fill="rgb(54,80,129)" stroke="rgb(54,80,129)" stroke-width="0.5"/><polygon points="621.83,243.49 617.77,235.43 626.69,231.04 631.44,238.04" fill="rgb(63,92,150)" stroke="rgb(63,92,150)" stroke-width="0.5"/><polygon points="590.63,244.55 590.47,237.87 597.50,235.46 598.46,242.57" fill="rgb(51,75,122)" stroke="rgb(51,75,122)" stroke-width="0.5"/><polygon points="619.44,208.73 627.67,206.48 628.78,214.91 621.30,217.88" fill="rgb(74,109,176)" stroke="rgb(74,109,176)" stroke-width="0.5"/><polygon points="626.69,231.04 622.37,225.31 629.12,222.09 633.71,226.96" fill="rgb(69,101,165)" stroke="rgb(69,101,165)" stroke-width="0.5"/><polygon points="583.11,212.42 593.25,206.61 597.88,216.82 588.02,221.56" fill="rgb(61,90,147)" stroke="rgb(61,90,147)" stroke-width="0.5"/><polygon points="605.26,201.71 616.60,198.75 619.44,208.73 609.04,212.26" fill="rgb(73,108,175)" stroke="rgb(73,108,175)" stroke-width="0.5"/><polygon points="585.70,232.50 593.07,229.40 597.50,235.46 590.47,237.87" fill="rgb(54,79,129)" stroke="rgb(54,79,129)" stroke-width="0.5"/><polygon points="610.67,248.05 607.87,239.47 617.77,235.43 621.83,243.49" fill="rgb(58,86,139)" stroke="rgb(58,86,139)" stroke-width="0.5"/><polygon points="621.30,217.88 628.78,214.91 629.12,222.09 622.37,225.31" fill="rgb(71,105,171)" stroke="rgb(71,105,171)" stroke-width="0.5"/><polygon points="593.25,206.61 605.26,201.71 609.04,212.26 597.88,216.82" fill="rgb(68,101,164)" stroke="rgb(68,101,164)" stroke-width="0.5"/><polygon points="598.46,242.57 597.50,235.46 605.71,232.38 607.87,239.47" fill="rgb(57,84,137)" stroke="rgb(57,84,137)" stroke-width="0.5"/><polygon points="617.77,235.43 614.33,228.86 622.37,225.31 626.69,231.04" fill="rgb(66,98,159)" stroke="rgb(66,98,159)" stroke-width="0.5"/><polygon points="588.02,221.56 597.88,216.82 602.20,225.62 593.07,229.40" fill="rgb(61,90,147)" stroke="rgb(61,90,147)" stroke-width="0.5"/><polygon points="609.04,212.26 619.44,208.73 621.30,217.88 612.10,221.58" fill="rgb(72,106,172)" stroke="rgb(72,106,172)" stroke-width="0.5"/><polygon points="593.07,229.40 602.20,225.62 605.71,232.38 597.50,235.46" fill="rgb(60,88,144)" stroke="rgb(60,88,144)" stroke-width="0.5"/><polygon points="607.87,239.47 605.71,232.38 614.33,228.86 617.77,235.43" fill="rgb(62,92,150)" stroke="rgb(62,92,150)" stroke-width="0.5"/><polygon points="612.10,221.58 621.30,217.88 622.37,225.31 614.33,228.86" fill="rgb(69,102,166)" stroke="rgb(69,102,166)" stroke-width="0.5"/><polygon points="597.88,216.82 609.04,212.26 612.10,221.58 602.20,225.62" fill="rgb(68,100,162)" stroke="rgb(68,100,162)" stroke-width="0.5"/><polygon points="602.20,225.62 612.10,221.58 614.33,228.86 605.71,232.38" fill="rgb(65,97,157)" stroke="rgb(65,97,157)" stroke-width="0.5"/><path d="M649.37 206.01L653.25 215.64L650.26 208.48L646.38 198.85ZM589.98 266.85L594.31 268.69L591.27 266.94L585.99 265.15ZM650.29 242.23L648.42 246.60L649.28 243.26L651.86 238.26ZM561.93 223.58L562.35 233.16L562.76 225.88L562.15 217.38ZM567.18 202.20L568.88 199.88L572.98 194.44L571.14 196.14ZM571.14 196.14L572.98 194.44L578.76 188.89L577.17 189.69ZM614.22 178.55L611.63 178.66L618.37 179.67L621.29 180.11ZM577.17 189.69L578.76 188.89L586.22 183.97L585.48 183.85ZM640.06 191.69L646.38 198.85L640.88 193.99L635.46 187.45ZM605.40 178.17L603.62 178.74L611.63 178.66L614.22 178.55ZM585.48 183.85L586.22 183.97L594.84 180.45L595.38 179.81ZM595.38 179.81L594.84 180.45L603.62 178.74L605.40 178.17ZM563.74 210.54L562.15 217.38L564.43 212.48L565.31 206.57ZM580.14 261.35L585.99 265.15L582.39 261.36L575.54 257.11ZM629.61 183.65L635.46 187.45L630.30 185.59L625.62 181.95ZM594.31 268.69L591.27 266.94L598.44 268.86L601.38 270.25ZM653.45 231.42L651.86 238.26L651.68 233.07L653.67 225.22ZM644.46 252.66L645.49 249.65L649.28 243.26L648.42 246.60ZM567.18 202.20L565.31 206.57L567.75 203.80L568.88 199.88ZM601.38 270.25L598.44 268.86L607.86 269.61L610.20 270.63ZM621.29 180.11L625.62 181.95L621.86 181.71L618.37 179.67ZM638.43 259.11L639.28 256.78L645.49 249.65L644.46 252.66ZM610.20 270.63L607.86 269.61L619.02 268.02L620.22 268.99ZM630.12 264.95L630.18 263.46L639.28 256.78L638.43 259.11ZM620.22 268.99L619.02 268.02L630.18 263.46L630.12 264.95ZM569.22 249.95L575.54 257.11L572.75 250.46L566.23 242.79ZM653.25 215.64L653.67 225.22L650.88 218.56L650.26 208.48ZM568.88 199.88L572.98 194.44L571.77 197.92L567.75 203.80ZM611.63 178.66L618.37 179.67L621.86 181.71L614.85 180.33ZM572.98 194.44L578.76 188.89L577.86 191.64L571.77 197.92ZM585.99 265.15L591.27 266.94L588.46 263.49L582.39 261.36ZM603.62 178.74L611.63 178.66L614.85 180.33L606.09 180.11ZM562.35 233.16L566.23 242.79L566.36 234.84L562.76 225.88ZM651.86 238.26L649.28 243.26L648.78 238.86L651.68 233.07ZM578.76 188.89L586.22 183.97L586.21 185.89L577.86 191.64ZM594.84 180.45L603.62 178.74L606.09 180.11L596.11 181.85ZM646.38 198.85L650.26 208.48L644.49 202.95L640.88 193.99ZM586.22 183.97L594.84 180.45L596.11 181.85L586.21 185.89ZM562.15 217.38L562.76 225.88L565.38 219.81L564.43 212.48ZM565.31 206.57L564.43 212.48L567.54 208.96L567.75 203.80ZM625.62 181.95L630.30 185.59L625.55 185.28L621.86 181.71ZM635.46 187.45L640.88 193.99L634.67 191.52L630.30 185.59ZM591.27 266.94L588.46 263.49L595.48 265.27L598.44 268.86ZM645.49 249.65L644.98 245.06L648.78 238.86L649.28 243.26ZM575.54 257.11L582.39 261.36L579.92 255.46L572.75 250.46ZM653.67 225.22L651.68 233.07L649.21 227.17L650.88 218.56ZM598.44 268.86L595.48 265.27L605.08 265.92L607.86 269.61ZM639.28 256.78L638.56 252.25L644.98 245.06L645.49 249.65ZM567.75 203.80L571.77 197.92L571.49 203.03L567.54 208.96ZM614.85 180.33L621.86 181.71L625.55 185.28L618.54 183.82ZM607.86 269.61L605.08 265.92L616.87 264.16L619.02 268.02ZM630.18 263.46L628.88 259.25L638.56 252.25L639.28 256.78ZM571.77 197.92L577.86 191.64L577.86 196.34L571.49 203.03ZM566.23 242.79L572.75 250.46L572.30 242.61L566.36 234.84ZM619.02 268.02L616.87 264.16L628.88 259.25L630.18 263.46ZM606.09 180.11L614.85 180.33L618.54 183.82L609.29 183.51ZM650.26 208.48L650.88 218.56L645.61 212.67L644.49 202.95ZM564.43 212.48L565.38 219.81L568.73 215.27L567.54 208.96ZM582.39 261.36L588.46 263.49L586.31 258.35L579.92 255.46ZM630.30 185.59L634.67 191.52L629.04 190.64L625.55 185.28ZM562.76 225.88L566.36 234.84L568.58 227.76L565.38 219.81ZM577.86 191.64L586.21 185.89L587.06 189.94L577.86 196.34ZM651.68 233.07L648.78 238.86L646.63 233.73L649.21 227.17ZM596.11 181.85L606.09 180.11L609.29 183.51L598.22 185.38ZM640.88 193.99L644.49 202.95L637.87 199.47L634.67 191.52ZM586.21 185.89L596.11 181.85L598.22 185.38L587.06 189.94ZM588.46 263.49L586.31 258.35L593.01 259.36L595.48 265.27ZM644.98 245.06L642.51 239.16L646.63 233.73L648.78 238.86ZM567.54 208.96L571.49 203.03L572.81 209.87L568.73 215.27ZM572.75 250.46L579.92 255.46L578.95 248.31L572.30 242.61ZM618.54 183.82L625.55 185.28L629.04 190.64L622.30 189.66ZM650.88 218.56L649.21 227.17L644.82 221.42L645.61 212.67ZM565.38 219.81L568.58 227.76L571.51 222.18L568.73 215.27ZM595.48 265.27L593.01 259.36L602.29 259.26L605.08 265.92ZM566.36 234.84L572.30 242.61L573.56 235.14L568.58 227.76ZM634.67 191.52L637.87 199.47L631.82 197.56L629.04 190.64ZM638.56 252.25L635.77 245.59L642.51 239.16L644.98 245.06ZM644.49 202.95L645.61 212.67L639.43 208.25L637.87 199.47ZM571.49 203.03L577.86 196.34L579.51 203.46L572.81 209.87ZM609.29 183.51L618.54 183.82L622.30 189.66L612.99 189.79ZM579.92 255.46L586.31 258.35L585.06 252.11L578.95 248.31ZM649.21 227.17L646.63 233.73L643.08 228.43L644.82 221.42ZM605.08 265.92L602.29 259.26L613.88 257.00L616.87 264.16ZM628.88 259.25L625.88 252.10L635.77 245.59L638.56 252.25ZM577.86 196.34L587.06 189.94L589.37 196.97L579.51 203.46ZM598.22 185.38L609.29 183.51L612.99 189.79L601.38 192.07ZM616.87 264.16L613.88 257.00L625.88 252.10L628.88 259.25ZM568.73 215.27L572.81 209.87L576.01 217.81L571.51 222.18ZM587.06 189.94L598.22 185.38L601.38 192.07L589.37 196.97ZM586.31 258.35L585.06 252.11L591.40 252.02L593.01 259.36ZM572.30 242.61L578.95 248.31L579.23 241.15L573.56 235.14ZM622.30 189.66L629.04 190.64L631.82 197.56L625.50 197.60ZM642.51 239.16L638.45 232.81L643.08 228.43L646.63 233.73ZM645.61 212.67L644.82 221.42L639.54 216.53L639.43 208.25ZM568.58 227.76L573.56 235.14L575.57 228.92L571.51 222.18ZM637.87 199.47L639.43 208.25L633.59 205.24L631.82 197.56ZM578.95 248.31L585.06 252.11L584.67 245.64L579.23 241.15ZM644.82 221.42L643.08 228.43L638.78 223.55L639.54 216.53ZM593.01 259.36L591.40 252.02L600.02 250.87L602.29 259.26ZM572.81 209.87L579.51 203.46L583.11 212.42L576.01 217.81ZM635.77 245.59L631.44 238.04L638.45 232.81L642.51 239.16ZM612.99 189.79L622.30 189.66L625.50 197.60L616.60 198.75ZM573.56 235.14L579.23 241.15L580.24 234.82L575.57 228.92ZM639.43 208.25L639.54 216.53L634.35 212.73L633.59 205.24ZM571.51 222.18L576.01 217.81L580.62 225.69L575.57 228.92ZM625.50 197.60L631.82 197.56L633.59 205.24L627.67 206.48ZM585.06 252.11L584.67 245.64L590.63 244.55L591.40 252.02ZM638.45 232.81L633.71 226.96L638.78 223.55L643.08 228.43ZM579.23 241.15L584.67 245.64L584.87 239.61L580.24 234.82ZM602.29 259.26L600.02 250.87L610.67 248.05L613.88 257.00ZM639.54 216.53L638.78 223.55L634.37 219.40L634.35 212.73ZM625.88 252.10L621.83 243.49L631.44 238.04L635.77 245.59ZM579.51 203.46L589.37 196.97L593.25 206.61L583.11 212.42ZM601.38 192.07L612.99 189.79L616.60 198.75L605.26 201.71ZM613.88 257.00L610.67 248.05L621.83 243.49L625.88 252.10ZM575.57 228.92L580.62 225.69L585.70 232.50L580.24 234.82ZM589.37 196.97L601.38 192.07L605.26 201.71L593.25 206.61ZM627.67 206.48L633.59 205.24L634.35 212.73L628.78 214.91ZM584.67 245.64L584.87 239.61L590.47 237.87L590.63 244.55ZM576.01 217.81L583.11 212.42L588.02 221.56L580.62 225.69ZM591.40 252.02L590.63 244.55L598.46 242.57L600.02 250.87ZM633.71 226.96L629.12 222.09L634.37 219.40L638.78 223.55ZM616.60 198.75L625.50 197.60L627.67 206.48L619.44 208.73ZM631.44 238.04L626.69 231.04L633.71 226.96L638.45 232.81ZM580.24 234.82L585.70 232.50L590.47 237.87L584.87 239.61ZM628.78 214.91L634.35 212.73L634.37 219.40L629.12 222.09ZM600.02 250.87L598.46 242.57L607.87 239.47L610.67 248.05ZM580.62 225.69L588.02 221.56L593.07 229.40L585.70 232.50ZM621.83 243.49L617.77 235.43L626.69 231.04L631.44 238.04ZM590.63 244.55L590.47 237.87L597.50 235.46L598.46 242.57ZM619.44 208.73L627.67 206.48L628.78 214.91L621.30 217.88ZM626.69 231.04L622.37 225.31L629.12 222.09L633.71 226.96ZM583.11 212.42L593.25 206.61L597.88 216.82L588.02 221.56ZM605.26 201.71L616.60 198.75L619.44 208.73L609.04 212.26ZM585.70 232.50L593.07 229.40L597.50 235.46L590.47 237.87ZM610.67 248.05L607.87 239.47L617.77 235.43L621.83 243.49ZM621.30 217.88L628.78 214.91L629.12 222.09L622.37 225.31ZM593.25 206.61L605.26 201.71L609.04 212.26L597.88 216.82ZM598.46 242.57L597.50 235.46L605.71 232.38L607.87 239.47ZM617.77 235.43L614.33 228.86L622.37 225.31L626.69 231.04ZM588.02 221.56L597.88 216.82L602.20 225.62L593.07 229.40ZM609.04 212.26L619.44 208.73L621.30 217.88L612.10 221.58ZM593.07 229.40L602.20 225.62L605.71 232.38L597.50 235.46ZM607.87 239.47L605.71 232.38L614.33 228.86L617.77 235.43ZM612.10 221.58L621.30 217.88L622.37 225.31L614.33 228.86ZM597.88 216.82L609.04 212.26L612.10 221.58L602.20 225.62ZM602.20 225.62L612.10 221.58L614.33 228.86L605.71 232.38Z" stroke="#000" stroke-width="1" fill="none" shape-rendering="crispEdges" clip-path="url(#sphclip)"/><clipPath id="sphclip"><circle cx="607.8" cy="224.4" r="46.3"/></clipPath><circle cx="607.8" cy="224.4" r="46.0" fill="none" stroke="#000" stroke-width="1.3"/></svg>
<div class="a" style="left:-1px;top:0px;width:420px;height:752px;background:linear-gradient(#d4e3f8 0px,#c6d9f4 28px,#b4c6e8 100px,#7b8bb8 390px,#475080 600px,#343b72 751px);border:1px solid #384058;border-radius:7px 7px 5px 5px;box-sizing:border-box;box-shadow:1px 1px 8px 2px rgba(10,10,40,.55);"></div>
<div class="a" style="left:0px;top:1px;width:418px;height:750px;border:1px solid rgba(255,255,255,.6);border-radius:6px 6px 4px 4px;box-sizing:border-box;"></div>
<div class="a" style="left:5px;top:27px;width:408px;height:719px;border:1px solid rgba(255,255,255,.6);box-sizing:border-box;"></div>
<div class="a" style="left:6px;top:28px;width:406px;height:717px;border:1px solid #2c3046;box-sizing:border-box;background:#f0f0f0;box-shadow:inset 0 0 0 1px #fff;"></div>
<div class="a" style="left:1px;top:2px;width:416px;height:26px;background:linear-gradient(100deg,rgba(255,255,255,.15) 0%,rgba(255,255,255,.05) 20%,rgba(60,90,150,.07) 36%,rgba(255,255,255,.05) 45%,rgba(60,90,150,.08) 54%,rgba(255,255,255,.12) 68%,rgba(255,255,255,.04) 85%,rgba(60,90,150,.04) 100%);border-radius:6px 6px 0 0;"></div>
<div class="t" style="left:8.00px;top:8.82px;font-size:12.5px;color:#000;transform:scaleX(1.0244);transform-origin:0 0;">Entity Creation</div>
<div class="a" style="left:365px;top:0px;width:47px;height:20px;border:1px solid #5b6478;border-top:none;border-radius:0 0 5px 5px;box-sizing:border-box;background:linear-gradient(rgba(255,255,255,.3),rgba(255,255,255,.08));box-shadow:inset 0 -1px 0 rgba(255,255,255,.7), inset 1px 0 0 rgba(255,255,255,.6), inset -1px 0 0 rgba(255,255,255,.6);"></div>
<svg class="a" style="left:380px;top:2px" width="18" height="16" viewBox="0 0 18 16"><path d="M6 4.5 L12.5 11.5 M12.5 4.5 L6 11.5" stroke="#454a5c" stroke-width="4.6" stroke-linecap="round"/><path d="M6 4.5 L12.5 11.5 M12.5 4.5 L6 11.5" stroke="#f6f8fb" stroke-width="2.6" stroke-linecap="round"/></svg>
<div class="a" style="left:12px;top:35px;width:180px;height:704px;background:#c7edcc;border-style:solid;border-width:1px;border-color:#a0a0a0 #fff #fff #a0a0a0;box-sizing:border-box;box-shadow:inset 1px 1px 0 #696969, inset -1px -1px 0 #e3e3e3;"></div>
<svg class="a" style="left:0px;top:0px" width="200" height="270" shape-rendering="crispEdges" fill="#808080"><rect x="23" y="51" width="1" height="1"/><rect x="23" y="53" width="1" height="1"/><rect x="23" y="55" width="1" height="1"/><rect x="23" y="57" width="1" height="1"/><rect x="23" y="59" width="1" height="1"/><rect x="23" y="61" width="1" height="1"/><rect x="23" y="63" width="1" height="1"/><rect x="23" y="65" width="1" height="1"/><rect x="23" y="67" width="1" height="1"/><rect x="23" y="69" width="1" height="1"/><rect x="23" y="71" width="1" height="1"/><rect x="23" y="73" width="1" height="1"/><rect x="23" y="75" width="1" height="1"/><rect x="23" y="77" width="1" height="1"/><rect x="23" y="79" width="1" height="1"/><rect x="23" y="81" width="1" height="1"/><rect x="23" y="83" width="1" height="1"/><rect x="23" y="85" width="1" height="1"/><rect x="23" y="87" width="1" height="1"/><rect x="23" y="89" width="1" height="1"/><rect x="23" y="91" width="1" height="1"/><rect x="23" y="93" width="1" height="1"/><rect x="23" y="95" width="1" height="1"/><rect x="23" y="97" width="1" height="1"/><rect x="23" y="99" width="1" height="1"/><rect x="23" y="101" width="1" height="1"/><rect x="23" y="103" width="1" height="1"/><rect x="23" y="105" width="1" height="1"/><rect x="23" y="107" width="1" height="1"/><rect x="23" y="109" width="1" height="1"/><rect x="23" y="111" width="1" height="1"/><rect x="23" y="113" width="1" height="1"/><rect x="23" y="115" width="1" height="1"/><rect x="23" y="117" width="1" height="1"/><rect x="23" y="119" width="1" height="1"/><rect x="23" y="121" width="1" height="1"/><rect x="23" y="123" width="1" height="1"/><rect x="23" y="125" width="1" height="1"/><rect x="23" y="127" width="1" height="1"/><rect x="23" y="129" width="1" height="1"/><rect x="23" y="131" width="1" height="1"/><rect x="23" y="133" width="1" height="1"/><rect x="23" y="135" width="1" height="1"/><rect x="23" y="137" width="1" height="1"/><rect x="23" y="139" width="1" height="1"/><rect x="23" y="141" width="1" height="1"/><rect x="23" y="143" width="1" height="1"/><rect x="23" y="145" width="1" height="1"/><rect x="23" y="147" width="1" height="1"/><rect x="23" y="149" width="1" height="1"/><rect x="23" y="151" width="1" height="1"/><rect x="23" y="153" width="1" height="1"/><rect x="23" y="155" width="1" height="1"/><rect x="23" y="157" width="1" height="1"/><rect x="23" y="159" width="1" height="1"/><rect x="23" y="161" width="1" height="1"/><rect x="23" y="163" width="1" height="1"/><rect x="23" y="165" width="1" height="1"/><rect x="23" y="167" width="1" height="1"/><rect x="23" y="169" width="1" height="1"/><rect x="23" y="171" width="1" height="1"/><rect x="23" y="173" width="1" height="1"/><rect x="23" y="175" width="1" height="1"/><rect x="23" y="177" width="1" height="1"/><rect x="23" y="179" width="1" height="1"/><rect x="23" y="181" width="1" height="1"/><rect x="23" y="183" width="1" height="1"/><rect x="23" y="185" width="1" height="1"/><rect x="23" y="187" width="1" height="1"/><rect x="23" y="189" width="1" height="1"/><rect x="23" y="191" width="1" height="1"/><rect x="23" y="193" width="1" height="1"/><rect x="23" y="195" width="1" height="1"/><rect x="23" y="197" width="1" height="1"/><rect x="23" y="199" width="1" height="1"/><rect x="23" y="201" width="1" height="1"/><rect x="23" y="203" width="1" height="1"/><rect x="23" y="205" width="1" height="1"/><rect x="23" y="207" width="1" height="1"/><rect x="23" y="209" width="1" height="1"/><rect x="23" y="211" width="1" height="1"/><rect x="23" y="213" width="1" height="1"/><rect x="23" y="215" width="1" height="1"/><rect x="23" y="217" width="1" height="1"/><rect x="23" y="219" width="1" height="1"/><rect x="23" y="221" width="1" height="1"/><rect x="23" y="223" width="1" height="1"/><rect x="23" y="225" width="1" height="1"/><rect x="23" y="227" width="1" height="1"/><rect x="23" y="229" width="1" height="1"/><rect x="23" y="231" width="1" height="1"/><rect x="23" y="233" width="1" height="1"/><rect x="23" y="235" width="1" height="1"/><rect x="23" y="237" width="1" height="1"/><rect x="23" y="239" width="1" height="1"/><rect x="23" y="241" width="1" height="1"/><rect x="23" y="243" width="1" height="1"/><rect x="23" y="245" width="1" height="1"/><rect x="23" y="247" width="1" height="1"/><rect x="42" y="87" width="1" height="1"/><rect x="42" y="89" width="1" height="1"/><rect x="42" y="91" width="1" height="1"/><rect x="42" y="93" width="1" height="1"/><rect x="46" y="93" width="1" height="1"/><rect x="48" y="93" width="1" height="1"/><rect x="50" y="93" width="1" height="1"/><rect x="29" y="45" width="1" height="1"/><rect x="31" y="45" width="1" height="1"/><rect x="29" y="61" width="1" height="1"/><rect x="31" y="61" width="1" height="1"/><rect x="29" y="77" width="1" height="1"/><rect x="31" y="77" width="1" height="1"/><rect x="29" y="109" width="1" height="1"/><rect x="31" y="109" width="1" height="1"/><rect x="29" y="125" width="1" height="1"/><rect x="31" y="125" width="1" height="1"/><rect x="29" y="141" width="1" height="1"/><rect x="31" y="141" width="1" height="1"/><rect x="29" y="157" width="1" height="1"/><rect x="31" y="157" width="1" height="1"/><rect x="29" y="173" width="1" height="1"/><rect x="31" y="173" width="1" height="1"/><rect x="29" y="189" width="1" height="1"/><rect x="31" y="189" width="1" height="1"/><rect x="29" y="205" width="1" height="1"/><rect x="31" y="205" width="1" height="1"/><rect x="29" y="221" width="1" height="1"/><rect x="31" y="221" width="1" height="1"/><rect x="29" y="237" width="1" height="1"/><rect x="31" y="237" width="1" height="1"/><rect x="29" y="253" width="1" height="1"/><rect x="31" y="253" width="1" height="1"/></svg>
<svg class="a" style="left:19px;top:41px" width="9" height="9" shape-rendering="crispEdges"><rect x="0.5" y="0.5" width="8" height="8" fill="#c7edcc" stroke="#808080"/><rect x="2" y="4" width="5" height="1" fill="#000"/><rect x="4" y="2" width="1" height="5" fill="#000"/></svg>
<div class="t" style="left:35.30px;top:40.24px;font-size:12px;color:#000;transform:scaleX(0.9631);transform-origin:0 0;">Airbag</div>
<svg class="a" style="left:19px;top:57px" width="9" height="9" shape-rendering="crispEdges"><rect x="0.5" y="0.5" width="8" height="8" fill="#c7edcc" stroke="#808080"/><rect x="2" y="4" width="5" height="1" fill="#000"/><rect x="4" y="2" width="1" height="5" fill="#000"/></svg>
<div class="t" style="left:35.30px;top:56.24px;font-size:12px;color:#000;transform:scaleX(0.9833);transform-origin:0 0;">Application</div>
<svg class="a" style="left:19px;top:73px" width="9" height="9" shape-rendering="crispEdges"><rect x="0.5" y="0.5" width="8" height="8" fill="#c7edcc" stroke="#808080"/><rect x="2" y="4" width="5" height="1" fill="#000"/></svg>
<div class="t" style="left:35.30px;top:72.24px;font-size:12px;color:#0000ff;transform:scaleX(0.9930);transform-origin:0 0;">Boundary</div>
<div class="a" style="left:52px;top:88px;width:27px;height:12px;background:#e4ece4;"></div>
<div class="t" style="left:54.30px;top:88.24px;font-size:12px;color:#0000ff;font-weight:bold;transform:scaleX(1.0082);transform-origin:0 0;">Spc</div>
<svg class="a" style="left:19px;top:105px" width="9" height="9" shape-rendering="crispEdges"><rect x="0.5" y="0.5" width="8" height="8" fill="#c7edcc" stroke="#808080"/><rect x="2" y="4" width="5" height="1" fill="#000"/><rect x="4" y="2" width="1" height="5" fill="#000"/></svg>
<div class="t" style="left:35.30px;top:104.24px;font-size:12px;color:#000;transform:scaleX(0.9740);transform-origin:0 0;">Constrained</div>
<svg class="a" style="left:19px;top:121px" width="9" height="9" shape-rendering="crispEdges"><rect x="0.5" y="0.5" width="8" height="8" fill="#c7edcc" stroke="#808080"/><rect x="2" y="4" width="5" height="1" fill="#000"/><rect x="4" y="2" width="1" height="5" fill="#000"/></svg>
<div class="t" style="left:35.30px;top:120.24px;font-size:12px;color:#000;transform:scaleX(1.0160);transform-origin:0 0;">Contact</div>
<svg class="a" style="left:19px;top:137px" width="9" height="9" shape-rendering="crispEdges"><rect x="0.5" y="0.5" width="8" height="8" fill="#c7edcc" stroke="#808080"/><rect x="2" y="4" width="5" height="1" fill="#000"/><rect x="4" y="2" width="1" height="5" fill="#000"/></svg>
<div class="t" style="left:35.30px;top:136.24px;font-size:12px;color:#000;transform:scaleX(0.9437);transform-origin:0 0;">Damping</div>
<svg class="a" style="left:19px;top:153px" width="9" height="9" shape-rendering="crispEdges"><rect x="0.5" y="0.5" width="8" height="8" fill="#c7edcc" stroke="#808080"/><rect x="2" y="4" width="5" height="1" fill="#000"/><rect x="4" y="2" width="1" height="5" fill="#000"/></svg>
<div class="t" style="left:35.30px;top:152.24px;font-size:12px;color:#000;transform:scaleX(0.9482);transform-origin:0 0;">Database</div>
<svg class="a" style="left:19px;top:169px" width="9" height="9" shape-rendering="crispEdges"><rect x="0.5" y="0.5" width="8" height="8" fill="#c7edcc" stroke="#808080"/><rect x="2" y="4" width="5" height="1" fill="#000"/><rect x="4" y="2" width="1" height="5" fill="#000"/></svg>
<div class="t" style="left:35.30px;top:168.24px;font-size:12px;color:#000;transform:scaleX(0.9717);transform-origin:0 0;">Define</div>
<svg class="a" style="left:19px;top:185px" width="9" height="9" shape-rendering="crispEdges"><rect x="0.5" y="0.5" width="8" height="8" fill="#c7edcc" stroke="#808080"/><rect x="2" y="4" width="5" height="1" fill="#000"/><rect x="4" y="2" width="1" height="5" fill="#000"/></svg>
<div class="t" style="left:35.30px;top:184.24px;font-size:12px;color:#000;transform:scaleX(1.0104);transform-origin:0 0;">Element</div>
<svg class="a" style="left:19px;top:201px" width="9" height="9" shape-rendering="crispEdges"><rect x="0.5" y="0.5" width="8" height="8" fill="#c7edcc" stroke="#808080"/><rect x="2" y="4" width="5" height="1" fill="#000"/><rect x="4" y="2" width="1" height="5" fill="#000"/></svg>
<div class="t" style="left:35.30px;top:200.24px;font-size:12px;color:#000;transform:scaleX(0.9850);transform-origin:0 0;">Initial</div>
<svg class="a" style="left:19px;top:217px" width="9" height="9" shape-rendering="crispEdges"><rect x="0.5" y="0.5" width="8" height="8" fill="#c7edcc" stroke="#808080"/><rect x="2" y="4" width="5" height="1" fill="#000"/><rect x="4" y="2" width="1" height="5" fill="#000"/></svg>
<div class="t" style="left:35.30px;top:216.24px;font-size:12px;color:#000;transform:scaleX(0.9176);transform-origin:0 0;">Load</div>
<svg class="a" style="left:19px;top:233px" width="9" height="9" shape-rendering="crispEdges"><rect x="0.5" y="0.5" width="8" height="8" fill="#c7edcc" stroke="#808080"/><rect x="2" y="4" width="5" height="1" fill="#000"/><rect x="4" y="2" width="1" height="5" fill="#000"/></svg>
<div class="t" style="left:35.30px;top:232.24px;font-size:12px;color:#000;transform:scaleX(0.9333);transform-origin:0 0;">Rigidwall</div>
<svg class="a" style="left:19px;top:249px" width="9" height="9" shape-rendering="crispEdges"><rect x="0.5" y="0.5" width="8" height="8" fill="#c7edcc" stroke="#808080"/><rect x="2" y="4" width="5" height="1" fill="#000"/><rect x="4" y="2" width="1" height="5" fill="#000"/></svg>
<div class="t" style="left:35.30px;top:248.24px;font-size:12px;color:#0000ff;transform:scaleX(1.0120);transform-origin:0 0;">Set Data</div>
<svg class="a" style="left:214px;top:39px" width="12" height="12" shape-rendering="crispEdges"><use href="#rg" width="12" height="12"/></svg>
<div class="t" style="left:231.00px;top:41.24px;font-size:12px;color:#000;transform:scaleX(1.0047);transform-origin:0 0;">Show</div>
<svg class="a" style="left:269px;top:39px" width="12" height="12" shape-rendering="crispEdges"><use href="#rgc" width="12" height="12"/></svg>
<div class="t" style="left:286.30px;top:41.24px;font-size:12px;color:#000;transform:scaleX(0.8903);transform-origin:0 0;">Cre</div>
<svg class="a" style="left:311px;top:39px" width="12" height="12" shape-rendering="crispEdges"><use href="#rg" width="12" height="12"/></svg>
<div class="t" style="left:328.00px;top:41.24px;font-size:12px;color:#000;transform:scaleX(0.9383);transform-origin:0 0;">Mod</div>
<svg class="a" style="left:358px;top:39px" width="12" height="12" shape-rendering="crispEdges"><use href="#rg" width="12" height="12"/></svg>
<div class="t" style="left:375.00px;top:41.24px;font-size:12px;color:#000;transform:scaleX(0.9611);transform-origin:0 0;">Del</div>
<div class="a" style="left:204px;top:57px;width:200px;height:1px;background:#a0a0a0;"></div>
<div class="a" style="left:204px;top:58px;width:200px;height:1px;background:#fff;"></div>
<div class="t" style="left:204.90px;top:68.24px;font-size:12px;color:#8c8c8c;transform:scaleX(0.9271);transform-origin:0 0;">Label</div>
<div class="a" style="left:235px;top:62px;width:166px;height:21px;border-style:solid;border-width:1px;border-color:#a0a0a0 #fff #fff #a0a0a0;box-shadow:inset 1px 1px 0 #696969, inset -1px -1px 0 #e3e3e3;box-sizing:border-box;background:#f0f0f0;"></div>
<div class="t" style="left:239.50px;top:68.24px;font-size:12px;color:#6d6d80;transform:scaleX(0.9554);transform-origin:0 0;">None</div>
<div class="a" style="left:384px;top:64px;width:16px;height:18px;background:#f0f0f0;border-style:solid;border-width:1px;border-color:#fff #696969 #696969 #fff;box-sizing:border-box;box-shadow:inset -1px -1px 0 #a0a0a0, inset 1px 1px 0 #e3e3e3;"></div>
<svg class="a" style="left:388px;top:71px" width="7" height="4" shape-rendering="crispEdges"><path d="M0 0h7v1h-1v1h-1v1h-1v1h-1v-1h-1v-1h-1v-1h-1z" fill="#a0a0a0"/></svg>
<div class="a" style="left:204px;top:87px;width:200px;height:1px;background:#a0a0a0;"></div>
<div class="a" style="left:204px;top:88px;width:200px;height:1px;background:#fff;"></div>
<svg class="a" style="left:223px;top:95px" width="12" height="12" shape-rendering="crispEdges"><use href="#rg" width="12" height="12"/></svg>
<div class="t" style="left:240.00px;top:97.24px;font-size:12px;color:#000;transform:scaleX(0.9833);transform-origin:0 0;">Node</div>
<svg class="a" style="left:331px;top:95px" width="12" height="12" shape-rendering="crispEdges"><use href="#rgc" width="12" height="12"/></svg>
<div class="t" style="left:348.20px;top:97.24px;font-size:12px;color:#000;transform:scaleX(1.0500);transform-origin:0 0;">Set</div>
<div class="a" style="left:205px;top:115px;width:87px;height:24px;background:#f0f0f0;border-style:solid;border-width:1px;border-color:#fff #696969 #696969 #fff;box-sizing:border-box;box-shadow:inset -1px -1px 0 #a0a0a0, inset 1px 1px 0 #e3e3e3;"></div>
<div class="t" style="left:214.30px;top:121.24px;font-size:12px;color:#a0a0a0;transform:scaleX(1.0348);transform-origin:0 0;">Auto Merge</div>
<div class="a" style="left:298px;top:115px;width:90px;height:24px;background:#f0f0f0;border-style:solid;border-width:1px;border-color:#fff #696969 #696969 #fff;box-sizing:border-box;box-shadow:inset -1px -1px 0 #a0a0a0, inset 1px 1px 0 #e3e3e3;"></div>
<div class="t" style="left:301.90px;top:121.24px;font-size:12px;color:#a0a0a0;transform:scaleX(0.9758);transform-origin:0 0;">Transfer BCode</div>
<div class="t" style="left:201.50px;top:151.24px;font-size:12px;color:#000;transform:scaleX(1.0092);transform-origin:0 0;">Symmetry plane</div>
<div class="a" style="left:199px;top:145px;width:6px;height:20px;background:#f0f0f0;"></div>
<div class="a" style="left:294px;top:145px;width:109px;height:20px;background:#c7edcc;border-style:solid;border-width:1px;border-color:#a0a0a0 #fff #fff #a0a0a0;box-sizing:border-box;box-shadow:inset 1px 1px 0 #696969, inset -1px -1px 0 #e3e3e3;"></div>
<div class="t" style="left:298.20px;top:151.24px;font-size:12px;color:#000;transform:scaleX(1.0782);transform-origin:0 0;">All Fix[111111]</div>
<div class="a" style="left:387px;top:147px;width:15px;height:17px;background:#f0f0f0;border-style:solid;border-width:1px;border-color:#fff #696969 #696969 #fff;box-sizing:border-box;box-shadow:inset -1px -1px 0 #a0a0a0, inset 1px 1px 0 #e3e3e3;"></div>
<svg class="a" style="left:392px;top:154px" width="7" height="4" shape-rendering="crispEdges"><path d="M0 0h7v1h-1v1h-1v1h-1v1h-1v-1h-1v-1h-1v-1h-1z" fill="#000"/></svg>
<div class="t" style="left:218.70px;top:174.24px;font-size:12px;color:#000;transform:scaleX(0.9398);transform-origin:0 0;">X</div>
<svg class="a" style="left:216px;top:190px" width="13" height="13" shape-rendering="crispEdges"><use href="#cbc" width="13" height="13"/></svg>
<div class="t" style="left:251.50px;top:174.24px;font-size:12px;color:#000;transform:scaleX(0.8772);transform-origin:0 0;">Y</div>
<svg class="a" style="left:248px;top:190px" width="13" height="13" shape-rendering="crispEdges"><use href="#cbc" width="13" height="13"/></svg>
<div class="t" style="left:282.40px;top:174.24px;font-size:12px;color:#000;transform:scaleX(1.0246);transform-origin:0 0;">Z</div>
<svg class="a" style="left:280px;top:190px" width="13" height="13" shape-rendering="crispEdges"><use href="#cbc" width="13" height="13"/></svg>
<div class="t" style="left:312.40px;top:174.24px;font-size:12px;color:#000;transform:scaleX(0.8200);transform-origin:0 0;">RX</div>
<svg class="a" style="left:312px;top:190px" width="13" height="13" shape-rendering="crispEdges"><use href="#cb" width="13" height="13"/></svg>
<div class="t" style="left:344.60px;top:174.24px;font-size:12px;color:#000;transform:scaleX(0.8637);transform-origin:0 0;">RY</div>
<svg class="a" style="left:344px;top:190px" width="13" height="13" shape-rendering="crispEdges"><use href="#cb" width="13" height="13"/></svg>
<div class="t" style="left:377.40px;top:174.24px;font-size:12px;color:#000;transform:scaleX(0.8427);transform-origin:0 0;">RZ</div>
<svg class="a" style="left:377px;top:190px" width="13" height="13" shape-rendering="crispEdges"><use href="#cb" width="13" height="13"/></svg>
<div class="a" style="left:237px;top:209px;width:107px;height:22px;background:#c7edcc;border-style:solid;border-width:1px;border-color:#a0a0a0 #fff #fff #a0a0a0;box-sizing:border-box;box-shadow:inset 1px 1px 0 #696969, inset -1px -1px 0 #e3e3e3;"></div>
<div class="a" style="left:237px;top:233px;width:107px;height:24px;background:#c7edcc;border-style:solid;border-width:1px;border-color:#a0a0a0 #fff #fff #a0a0a0;box-sizing:border-box;box-shadow:inset 1px 1px 0 #696969, inset -1px -1px 0 #e3e3e3;"></div>
<div class="t" style="left:212.60px;top:215.67px;font-size:11.5px;color:#0000ff;transform:scaleX(0.9050);transform-origin:0 0;">CID</div>
<div class="t" style="left:208.90px;top:240.67px;font-size:11.5px;color:#0000ff;transform:scaleX(0.9351);transform-origin:0 0;">NSID</div>
<div class="t" style="left:332.20px;top:240.24px;font-size:12px;color:#000;transform:scaleX(0.9309);transform-origin:0 0;">2</div>
<div class="a" style="left:347px;top:233px;width:53px;height:24px;background:#f0f0f0;border-style:solid;border-width:1px;border-color:#fff #696969 #696969 #fff;box-sizing:border-box;box-shadow:inset -1px -1px 0 #a0a0a0, inset 1px 1px 0 #e3e3e3;"></div>
<div class="t" style="left:356.00px;top:240.24px;font-size:12px;color:#000;transform:scaleX(1.0288);transform-origin:0 0;">NewId</div>
<div class="a" style="left:204px;top:263px;width:200px;height:1px;background:#a0a0a0;"></div>
<div class="a" style="left:204px;top:264px;width:200px;height:1px;background:#fff;"></div>
<div class="a" style="left:221px;top:268px;width:40px;height:24px;background:#f0f0f0;border-style:solid;border-width:1px;border-color:#fff #696969 #696969 #fff;box-sizing:border-box;box-shadow:inset -1px -1px 0 #a0a0a0, inset 1px 1px 0 #e3e3e3;"></div>
<div class="t" style="left:235.45px;top:274.24px;font-size:12px;color:#a0a0a0;transform:scaleX(0.8333);transform-origin:0 0;">All</div>
<div class="a" style="left:263px;top:268px;width:40px;height:24px;background:#f0f0f0;border-style:solid;border-width:1px;border-color:#fff #696969 #696969 #fff;box-sizing:border-box;box-shadow:inset -1px -1px 0 #a0a0a0, inset 1px 1px 0 #e3e3e3;"></div>
<div class="t" style="left:268.50px;top:274.24px;font-size:12px;color:#a0a0a0;transform:scaleX(1.0112);transform-origin:0 0;">None</div>
<div class="a" style="left:305px;top:268px;width:40px;height:24px;background:#f0f0f0;border-style:solid;border-width:1px;border-color:#fff #696969 #696969 #fff;box-sizing:border-box;box-shadow:inset -1px -1px 0 #a0a0a0, inset 1px 1px 0 #e3e3e3;"></div>
<div class="t" style="left:315.10px;top:274.24px;font-size:12px;color:#a0a0a0;transform:scaleX(0.9270);transform-origin:0 0;">Rev</div>
<div class="a" style="left:347px;top:268px;width:40px;height:24px;background:#f0f0f0;border-style:solid;border-width:1px;border-color:#fff #696969 #696969 #fff;box-sizing:border-box;box-shadow:inset -1px -1px 0 #a0a0a0, inset 1px 1px 0 #e3e3e3;"></div>
<div class="t" style="left:354.30px;top:274.24px;font-size:12px;color:#a0a0a0;transform:scaleX(0.9513);transform-origin:0 0;">AList</div>
<div class="a" style="left:226px;top:296px;width:51px;height:24px;background:#f0f0f0;border-style:solid;border-width:1px;border-color:#fff #696969 #696969 #fff;box-sizing:border-box;box-shadow:inset -1px -1px 0 #a0a0a0, inset 1px 1px 0 #e3e3e3;"></div>
<div class="t" style="left:236.60px;top:302.24px;font-size:12px;color:#000;transform:scaleX(0.9933);transform-origin:0 0;">Apply</div>
<div class="a" style="left:279px;top:296px;width:50px;height:24px;background:#f0f0f0;border-style:solid;border-width:1px;border-color:#fff #696969 #696969 #fff;box-sizing:border-box;box-shadow:inset -1px -1px 0 #a0a0a0, inset 1px 1px 0 #e3e3e3;"></div>
<div class="t" style="left:286.50px;top:302.24px;font-size:12px;color:#a0a0a0;transform:scaleX(0.9363);transform-origin:0 0;">Cancel</div>
<div class="a" style="left:331px;top:296px;width:50px;height:24px;background:#f0f0f0;border-style:solid;border-width:1px;border-color:#fff #696969 #696969 #fff;box-sizing:border-box;box-shadow:inset -1px -1px 0 #a0a0a0, inset 1px 1px 0 #e3e3e3;"></div>
<div class="t" style="left:341.30px;top:302.24px;font-size:12px;color:#000;transform:scaleX(1.0583);transform-origin:0 0;">Write</div>
<div class="a" style="left:205px;top:324px;width:198px;height:384px;background:#c7edcc;border-style:solid;border-width:1px;border-color:#a0a0a0 #fff #fff #a0a0a0;box-sizing:border-box;box-shadow:inset 1px 1px 0 #696969, inset -1px -1px 0 #e3e3e3;"></div>
<div class="a" style="left:207px;top:326px;width:194px;height:14px;background:#3399ff;"></div>
<div class="t" style="left:209.70px;top:328.24px;font-size:12px;color:#fff;transform:scaleX(1.0838);transform-origin:0 0;">NSet 1 (111000) (sub:1)</div>
<svg class="a" style="left:190px;top:380px" width="14" height="16"><path d="M9.6 3.2 L4.3 7.6 L9.6 12" stroke="#000" stroke-width="1.9" fill="none" stroke-linecap="square"/></svg>
<div class="a" style="left:204px;top:711px;width:200px;height:1px;background:#a0a0a0;"></div>
<div class="a" style="left:204px;top:712px;width:200px;height:1px;background:#fff;"></div>
<div class="a" style="left:266px;top:714px;width:75px;height:24px;background:#f0f0f0;border-style:solid;border-width:1px;border-color:#fff #696969 #696969 #fff;box-sizing:border-box;box-shadow:inset -1px -1px 0 #a0a0a0, inset 1px 1px 0 #e3e3e3;"></div>
<div class="t" style="left:289.45px;top:720.24px;font-size:12px;color:#000;transform:scaleX(0.9798);transform-origin:0 0;">Done</div>
<div class="a" style="left:444px;top:501px;width:354px;height:220px;background:linear-gradient(#9ca0c6 0px,#8a90b8 28px,#6870a0 100px,#3a4278 219px);border:1px solid #1e2238;border-radius:7px 7px 5px 5px;box-sizing:border-box;box-shadow:1px 1px 8px 2px rgba(10,10,40,.55);"></div>
<div class="a" style="left:445px;top:502px;width:352px;height:218px;border:1px solid rgba(255,255,255,.6);border-radius:6px 6px 4px 4px;box-sizing:border-box;"></div>
<div class="a" style="left:450px;top:529px;width:342px;height:186px;border:1px solid rgba(255,255,255,.6);box-sizing:border-box;"></div>
<div class="a" style="left:451px;top:530px;width:340px;height:184px;border:1px solid #2c3046;box-sizing:border-box;background:#f0f0f0;box-shadow:inset 0 0 0 1px #fff;"></div>
<div class="a" style="left:446px;top:503px;width:350px;height:26px;background:linear-gradient(100deg,rgba(40,40,90,.06) 0%,rgba(40,40,90,.1) 22%,rgba(30,30,80,.26) 38%,rgba(30,30,80,.12) 50%,rgba(255,255,255,.1) 62%,rgba(255,255,255,.04) 82%,rgba(40,40,90,.1) 100%);border-radius:6px 6px 0 0;"></div>
<div class="t" style="left:452.70px;top:509.99px;font-size:12.3px;color:#000;transform:scaleX(1.0011);transform-origin:0 0;">Sel. Nodes(0)</div>
<div class="a" style="left:744px;top:501px;width:47px;height:20px;border:1px solid #4a4f70;border-top:none;border-radius:0 0 5px 5px;box-sizing:border-box;box-shadow:inset 0 -1px 0 rgba(255,255,255,.4), inset 1px 0 0 rgba(255,255,255,.35), inset -1px 0 0 rgba(255,255,255,.35);"></div>
<svg class="a" style="left:762px;top:506px" width="12" height="10" viewBox="0 0 12 10"><path d="M2 1.5 L10 8.5 M10 1.5 L2 8.5" stroke="#b8bed6" stroke-width="2.6" stroke-linecap="square"/></svg>
<svg class="a" style="left:462px;top:537px" width="12" height="12" shape-rendering="crispEdges"><use href="#rgc" width="12" height="12"/></svg>
<div class="t" style="left:479.40px;top:539.24px;font-size:12px;color:#000;transform:scaleX(0.9235);transform-origin:0 0;">Pick</div>
<svg class="a" style="left:514px;top:537px" width="12" height="12" shape-rendering="crispEdges"><use href="#rg" width="12" height="12"/></svg>
<div class="t" style="left:531.50px;top:539.24px;font-size:12px;color:#000;transform:scaleX(0.9130);transform-origin:0 0;">Box</div>
<svg class="a" style="left:462px;top:555px" width="12" height="12" shape-rendering="crispEdges"><use href="#rg" width="12" height="12"/></svg>
<div class="t" style="left:479.40px;top:557.24px;font-size:12px;color:#000;transform:scaleX(0.9456);transform-origin:0 0;">Area</div>
<svg class="a" style="left:514px;top:555px" width="12" height="12" shape-rendering="crispEdges"><use href="#rg" width="12" height="12"/></svg>
<div class="t" style="left:531.50px;top:557.24px;font-size:12px;color:#000;transform:scaleX(0.9651);transform-origin:0 0;">Prox</div>
<svg class="a" style="left:462px;top:573px" width="12" height="12" shape-rendering="crispEdges"><use href="#rg" width="12" height="12"/></svg>
<div class="t" style="left:479.40px;top:575.24px;font-size:12px;color:#000;transform:scaleX(0.9254);transform-origin:0 0;">Poly</div>
<svg class="a" style="left:514px;top:573px" width="12" height="12" shape-rendering="crispEdges"><use href="#rg" width="12" height="12"/></svg>
<div class="t" style="left:531.50px;top:575.24px;font-size:12px;color:#000;transform:scaleX(0.8592);transform-origin:0 0;">Circ</div>
<svg class="a" style="left:462px;top:591px" width="12" height="12" shape-rendering="crispEdges"><use href="#rg" width="12" height="12"/></svg>
<div class="t" style="left:479.40px;top:593.24px;font-size:12px;color:#000;transform:scaleX(0.9000);transform-origin:0 0;">Sel1</div>
<svg class="a" style="left:514px;top:591px" width="12" height="12" shape-rendering="crispEdges"><use href="#rg" width="12" height="12"/></svg>
<div class="t" style="left:531.50px;top:593.24px;font-size:12px;color:#000;transform:scaleX(0.8576);transform-origin:0 0;">Frin</div>
<svg class="a" style="left:462px;top:609px" width="12" height="12" shape-rendering="crispEdges"><use href="#rg" width="12" height="12"/></svg>
<div class="t" style="left:479.40px;top:611.24px;font-size:12px;color:#000;transform:scaleX(0.9458);transform-origin:0 0;">Sphe</div>
<svg class="a" style="left:514px;top:609px" width="12" height="12" shape-rendering="crispEdges"><use href="#rg" width="12" height="12"/></svg>
<div class="t" style="left:531.50px;top:611.24px;font-size:12px;color:#000;transform:scaleX(0.8625);transform-origin:0 0;">Plan</div>
<svg class="a" style="left:579px;top:537px" width="12" height="12" shape-rendering="crispEdges"><use href="#rdc" width="12" height="12"/></svg>
<div class="t" style="left:595.90px;top:539.24px;font-size:12px;color:#a0a0a0;transform:scaleX(0.9880);transform-origin:0 0;">In</div>
<svg class="a" style="left:579px;top:555px" width="12" height="12" shape-rendering="crispEdges"><use href="#rd" width="12" height="12"/></svg>
<div class="t" style="left:595.90px;top:557.24px;font-size:12px;color:#a0a0a0;transform:scaleX(1.0300);transform-origin:0 0;">Out</div>
<svg class="a" style="left:579px;top:588px" width="12" height="12" shape-rendering="crispEdges"><use href="#rgc" width="12" height="12"/></svg>
<div class="t" style="left:596.00px;top:590.24px;font-size:12px;color:#000;transform:scaleX(0.9831);transform-origin:0 0;">Add</div>
<svg class="a" style="left:579px;top:606px" width="12" height="12" shape-rendering="crispEdges"><use href="#rg" width="12" height="12"/></svg>
<div class="t" style="left:596.00px;top:608.24px;font-size:12px;color:#000;transform:scaleX(0.8842);transform-origin:0 0;">Rm</div>
<div class="t" style="left:456.50px;top:637.24px;font-size:12px;color:#000;transform:scaleX(0.9083);transform-origin:0 0;">ID</div>
<div class="a" style="left:470px;top:631px;width:64px;height:22px;background:#c7edcc;border-style:solid;border-width:1px;border-color:#a0a0a0 #fff #fff #a0a0a0;box-sizing:border-box;box-shadow:inset 1px 1px 0 #696969, inset -1px -1px 0 #e3e3e3;"></div>
<div class="t" style="left:538.70px;top:637.24px;font-size:12px;color:#000;transform:scaleX(0.9985);transform-origin:0 0;">Type</div>
<div class="a" style="left:566px;top:631px;width:60px;height:21px;border-style:solid;border-width:1px;border-color:#a0a0a0 #fff #fff #a0a0a0;box-shadow:inset 1px 1px 0 #696969, inset -1px -1px 0 #e3e3e3;box-sizing:border-box;background:#f0f0f0;"></div>
<div class="t" style="left:570.00px;top:637.24px;font-size:12px;color:#a0a0a0;transform:scaleX(0.9317);transform-origin:0 0;">any</div>
<div class="a" style="left:607px;top:633px;width:17px;height:18px;background:#f0f0f0;border-style:solid;border-width:1px;border-color:#fff #696969 #696969 #fff;box-sizing:border-box;box-shadow:inset -1px -1px 0 #a0a0a0, inset 1px 1px 0 #e3e3e3;"></div>
<svg class="a" style="left:612px;top:640px" width="7" height="4" shape-rendering="crispEdges"><path d="M0 0h7v1h-1v1h-1v1h-1v1h-1v-1h-1v-1h-1v-1h-1z" fill="#a0a0a0"/></svg>
<svg class="a" style="left:456px;top:657px" width="13" height="13" shape-rendering="crispEdges"><use href="#cb" width="13" height="13"/></svg>
<div class="t" style="left:474.40px;top:659.24px;font-size:12px;color:#000;transform:scaleX(0.9820);transform-origin:0 0;">Label selection</div>
<svg class="a" style="left:558px;top:657px" width="13" height="13" shape-rendering="crispEdges"><use href="#cb" width="13" height="13"/></svg>
<div class="t" style="left:575.40px;top:659.24px;font-size:12px;color:#000;transform:scaleX(1.0139);transform-origin:0 0;">3DSurf</div>
<div class="a" style="left:635px;top:532px;width:75px;height:20px;background:#f0f0f0;border-style:solid;border-width:1px;border-color:#fff #696969 #696969 #fff;box-sizing:border-box;box-shadow:inset -1px -1px 0 #a0a0a0, inset 1px 1px 0 #e3e3e3;"></div>
<div class="t" style="left:648.40px;top:536.24px;font-size:12px;color:#000;transform:scaleX(1.0326);transform-origin:0 0;">Adjacent</div>
<div class="a" style="left:635px;top:552px;width:75px;height:20px;background:#f0f0f0;border-style:solid;border-width:1px;border-color:#fff #696969 #696969 #fff;box-sizing:border-box;box-shadow:inset -1px -1px 0 #a0a0a0, inset 1px 1px 0 #e3e3e3;"></div>
<div class="t" style="left:654.75px;top:556.24px;font-size:12px;color:#000;transform:scaleX(1.0435);transform-origin:0 0;">Attach</div>
<div class="a" style="left:635px;top:572px;width:75px;height:20px;background:#f0f0f0;border-style:solid;border-width:1px;border-color:#fff #696969 #696969 #fff;box-sizing:border-box;box-shadow:inset -1px -1px 0 #a0a0a0, inset 1px 1px 0 #e3e3e3;"></div>
<div class="t" style="left:659.60px;top:576.24px;font-size:12px;color:#000;transform:scaleX(0.8996);transform-origin:0 0;">Clear</div>
<div class="a" style="left:635px;top:592px;width:75px;height:20px;background:#f0f0f0;border-style:solid;border-width:1px;border-color:#fff #696969 #696969 #fff;box-sizing:border-box;box-shadow:inset -1px -1px 0 #a0a0a0, inset 1px 1px 0 #e3e3e3;"></div>
<div class="t" style="left:660.05px;top:596.24px;font-size:12px;color:#000;transform:scaleX(0.9101);transform-origin:0 0;">Save</div>
<div class="a" style="left:635px;top:612px;width:75px;height:20px;background:#f0f0f0;border-style:solid;border-width:1px;border-color:#fff #696969 #696969 #fff;box-sizing:border-box;box-shadow:inset -1px -1px 0 #a0a0a0, inset 1px 1px 0 #e3e3e3;"></div>
<div class="t" style="left:660.05px;top:616.24px;font-size:12px;color:#000;transform:scaleX(0.9326);transform-origin:0 0;">Load</div>
<div class="a" style="left:635px;top:632px;width:75px;height:20px;background:#f0f0f0;border-style:solid;border-width:1px;border-color:#fff #696969 #696969 #fff;box-sizing:border-box;box-shadow:inset -1px -1px 0 #a0a0a0, inset 1px 1px 0 #e3e3e3;"></div>
<div class="t" style="left:649.40px;top:636.24px;font-size:12px;color:#000;transform:scaleX(0.9897);transform-origin:0 0;">Deselect</div>
<div class="a" style="left:635px;top:652px;width:75px;height:20px;background:#f0f0f0;border-style:solid;border-width:1px;border-color:#fff #696969 #696969 #fff;box-sizing:border-box;box-shadow:inset -1px -1px 0 #a0a0a0, inset 1px 1px 0 #e3e3e3;"></div>
<div class="t" style="left:655.85px;top:656.24px;font-size:12px;color:#000;transform:scaleX(0.9788);transform-origin:0 0;">Whole</div>
<div class="a" style="left:635px;top:672px;width:75px;height:20px;background:#f0f0f0;border-style:solid;border-width:1px;border-color:#fff #696969 #696969 #fff;box-sizing:border-box;box-shadow:inset -1px -1px 0 #a0a0a0, inset 1px 1px 0 #e3e3e3;"></div>
<div class="t" style="left:656.80px;top:676.24px;font-size:12px;color:#000;transform:scaleX(0.8931);transform-origin:0 0;">Visible</div>
<div class="a" style="left:635px;top:692px;width:75px;height:20px;background:#f0f0f0;border-style:solid;border-width:1px;border-color:#fff #696969 #696969 #fff;box-sizing:border-box;box-shadow:inset -1px -1px 0 #a0a0a0, inset 1px 1px 0 #e3e3e3;"></div>
<div class="t" style="left:651.50px;top:696.24px;font-size:12px;color:#000;transform:scaleX(0.9396);transform-origin:0 0;">Reverse</div>
<svg class="a" style="left:719px;top:535px" width="12" height="12" shape-rendering="crispEdges"><use href="#rgc" width="12" height="12"/></svg>
<div class="t" style="left:736.40px;top:537.24px;font-size:12px;color:#000;transform:scaleX(0.9551);transform-origin:0 0;">ByNode</div>
<svg class="a" style="left:719px;top:551px" width="12" height="12" shape-rendering="crispEdges"><use href="#rg" width="12" height="12"/></svg>
<div class="t" style="left:736.40px;top:553.24px;font-size:12px;color:#000;transform:scaleX(0.9361);transform-origin:0 0;">ByElem</div>
<svg class="a" style="left:719px;top:567px" width="12" height="12" shape-rendering="crispEdges"><use href="#rg" width="12" height="12"/></svg>
<div class="t" style="left:736.40px;top:569.24px;font-size:12px;color:#000;transform:scaleX(0.9556);transform-origin:0 0;">ByPart</div>
<svg class="a" style="left:719px;top:583px" width="12" height="12" shape-rendering="crispEdges"><use href="#rd" width="12" height="12"/></svg>
<div class="t" style="left:736.40px;top:585.24px;font-size:12px;color:#a0a0a0;transform:scaleX(0.9215);transform-origin:0 0;">ByGPart</div>
<svg class="a" style="left:719px;top:599px" width="12" height="12" shape-rendering="crispEdges"><use href="#rg" width="12" height="12"/></svg>
<div class="t" style="left:736.40px;top:601.24px;font-size:12px;color:#000;transform:scaleX(0.9243);transform-origin:0 0;">BySubsys</div>
<svg class="a" style="left:719px;top:615px" width="12" height="12" shape-rendering="crispEdges"><use href="#rg" width="12" height="12"/></svg>
<div class="t" style="left:736.40px;top:617.24px;font-size:12px;color:#000;transform:scaleX(0.9218);transform-origin:0 0;">BySET</div>
<svg class="a" style="left:719px;top:631px" width="12" height="12" shape-rendering="crispEdges"><use href="#rg" width="12" height="12"/></svg>
<div class="t" style="left:736.40px;top:633.24px;font-size:12px;color:#000;transform:scaleX(0.9582);transform-origin:0 0;">ByEdge</div>
<svg class="a" style="left:719px;top:647px" width="12" height="12" shape-rendering="crispEdges"><use href="#rg" width="12" height="12"/></svg>
<div class="t" style="left:736.40px;top:649.24px;font-size:12px;color:#000;transform:scaleX(0.9535);transform-origin:0 0;">ByPath</div>
<svg class="a" style="left:719px;top:663px" width="12" height="12" shape-rendering="crispEdges"><use href="#rg" width="12" height="12"/></svg>
<div class="t" style="left:736.40px;top:665.24px;font-size:12px;color:#000;transform:scaleX(0.9568);transform-origin:0 0;">BySegm</div>
<svg class="a" style="left:719px;top:679px" width="12" height="12" shape-rendering="crispEdges"><use href="#rd" width="12" height="12"/></svg>
<div class="t" style="left:736.40px;top:681.24px;font-size:12px;color:#a0a0a0;transform:scaleX(0.9322);transform-origin:0 0;">ByCurve</div>
<svg class="a" style="left:719px;top:695px" width="12" height="12" shape-rendering="crispEdges"><use href="#rd" width="12" height="12"/></svg>
<div class="t" style="left:736.40px;top:697.24px;font-size:12px;color:#a0a0a0;transform:scaleX(0.9540);transform-origin:0 0;">BySurf</div>
<div class="a" style="left:42px;top:86px;width:45px;height:16px;border:3px solid #e8141c;border-radius:6px;box-sizing:border-box;"></div>
<div class="t" style="left:94.80px;top:85.55px;font-size:14px;color:#e8141c;font-weight:bold;">1</div>
<div class="a" style="left:263px;top:29px;width:47px;height:28px;border:3px solid #e8141c;border-radius:7px;box-sizing:border-box;"></div>
<div class="t" style="left:288.00px;top:60.55px;font-size:14px;color:#e8141c;font-weight:bold;">2</div>
<div class="a" style="left:321px;top:86px;width:52px;height:27px;border:3px solid #e8141c;border-radius:7px;box-sizing:border-box;"></div>
<div class="t" style="left:378.90px;top:98.55px;font-size:14px;color:#e8141c;font-weight:bold;">3</div>
<div class="a" style="left:207px;top:165px;width:96px;height:46px;border:3px solid #e8141c;border-radius:11px;box-sizing:border-box;"></div>
<div class="t" style="left:197.40px;top:184.55px;font-size:14px;color:#e8141c;font-weight:bold;">4</div>
<div class="a" style="left:226px;top:296px;width:49px;height:25px;border:3px solid #e8141c;border-radius:7px;box-sizing:border-box;"></div>
<div class="t" style="left:213.70px;top:299.55px;font-size:14px;color:#e8141c;font-weight:bold;">6</div>
<div class="a" style="left:650px;top:671px;width:45px;height:22px;border:3px solid #e8141c;border-radius:7px;box-sizing:border-box;"></div>
<div class="t" style="left:632.60px;top:677.55px;font-size:14px;color:#e8141c;font-weight:bold;">5</div>
</body></html>
